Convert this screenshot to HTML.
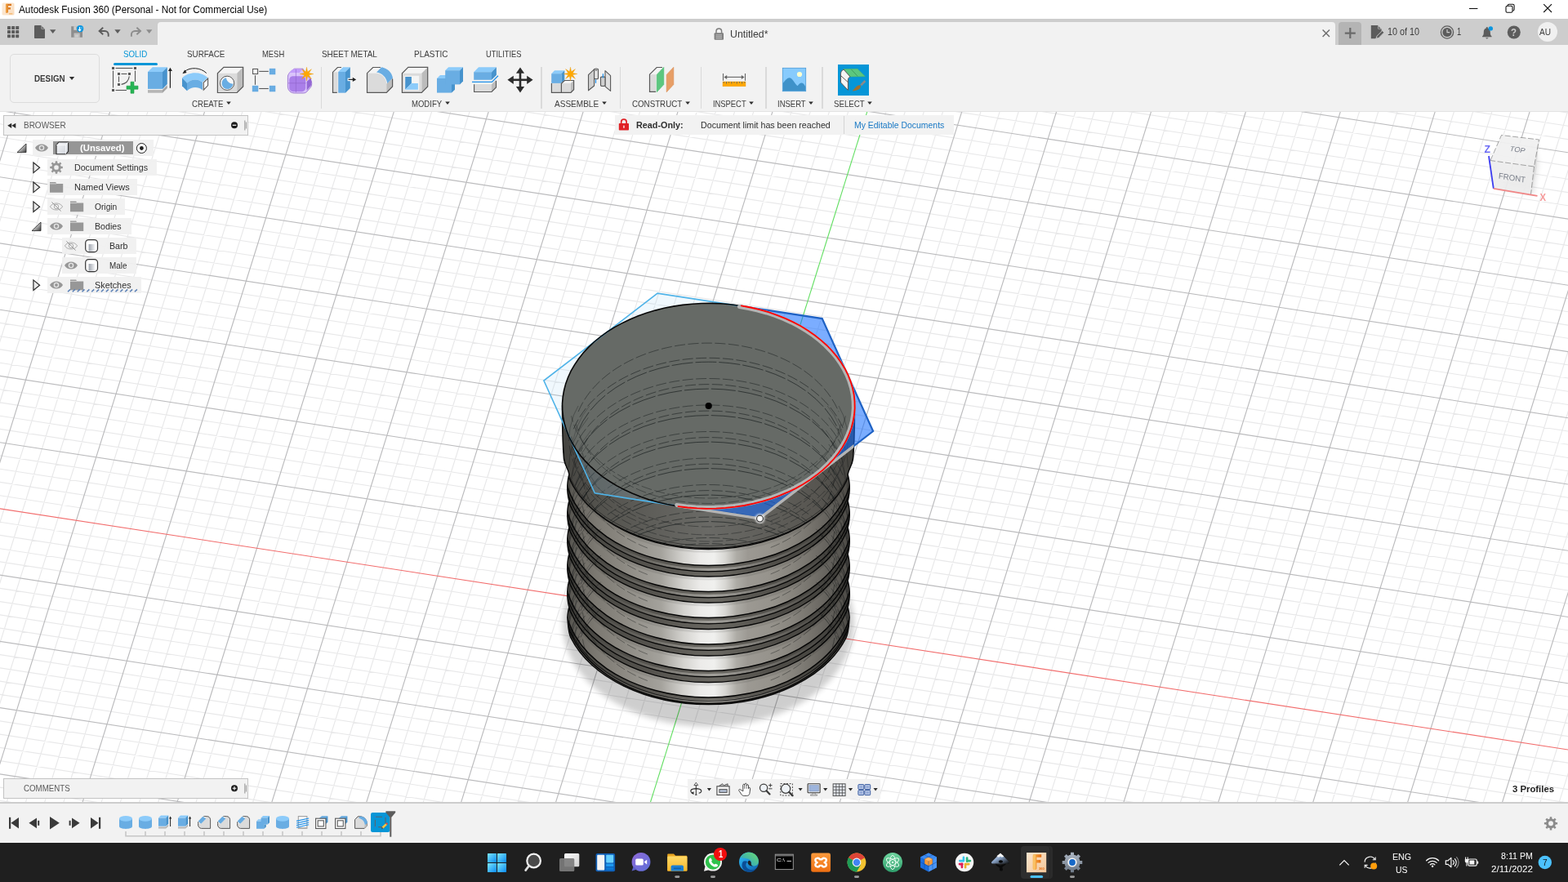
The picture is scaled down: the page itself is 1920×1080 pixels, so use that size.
<!DOCTYPE html>
<html lang="en"><head><meta charset="utf-8"><title>Autodesk Fusion 360 (Personal - Not for Commercial Use)</title>
<style>
*{box-sizing:border-box}
html,body{margin:0;padding:0}
body{width:1920px;height:1080px;overflow:hidden;background:#fff;font-family:"Liberation Sans",sans-serif;position:relative}
.a{position:absolute}
.t{position:absolute;white-space:nowrap;transform-origin:0 50%;display:block}
svg{position:absolute;overflow:visible}
</style></head>
<body>
<div class="a" id="viewport" style="left:0;top:136px;width:1920px;height:847px;background:#fff;overflow:hidden">
<svg style="left:0;top:0" width="1920" height="847" viewBox="0 136 1920 847">
<path d="M1893.4 134.0L1922.0 138.4M1787.7 134.0L1922.0 154.6M1682.0 134.0L1922.0 170.9M42.7 134.0L-2.0 276.5M1470.6 134.0L1922.0 203.4M65.9 134.0L-2.0 350.4M1364.8 134.0L1922.0 219.6M89.1 134.0L-2.0 424.2M1259.1 134.0L1922.0 235.9M112.3 134.0L-2.0 498.1M1153.4 134.0L1922.0 252.1M158.6 134.0L-2.0 645.8M941.9 134.0L1922.0 284.6M181.8 134.0L-2.0 719.6M836.2 134.0L1922.0 300.9M205.0 134.0L-2.0 793.5M730.5 134.0L1922.0 317.1M228.2 134.0L-2.0 867.3M624.8 134.0L1922.0 333.4M274.5 134.0L7.4 985.0M413.3 134.0L1922.0 365.9M297.7 134.0L30.6 985.0M307.6 134.0L1922.0 382.1M320.9 134.0L53.8 985.0M201.9 134.0L1922.0 398.4M344.1 134.0L77.0 985.0M96.1 134.0L1922.0 414.6M390.4 134.0L123.3 985.0M-2.0 151.4L1922.0 447.1M413.6 134.0L146.5 985.0M-2.0 167.7L1922.0 463.3M436.8 134.0L169.7 985.0M-2.0 183.9L1922.0 479.6M460.0 134.0L192.9 985.0M-2.0 200.2L1922.0 495.8M506.3 134.0L239.2 985.0M-2.0 232.7L1922.0 528.3M529.5 134.0L262.4 985.0M-2.0 248.9L1922.0 544.6M552.7 134.0L285.6 985.0M-2.0 265.2L1922.0 560.8M575.9 134.0L308.8 985.0M-2.0 281.4L1922.0 577.1M622.3 134.0L355.1 985.0M-2.0 313.9L1922.0 609.6M645.4 134.0L378.3 985.0M-2.0 330.1L1922.0 625.8M668.6 134.0L401.5 985.0M-2.0 346.4L1922.0 642.1M691.8 134.0L424.7 985.0M-2.0 362.6L1922.0 658.3M738.2 134.0L471.0 985.0M-2.0 395.1L1922.0 690.8M761.3 134.0L494.2 985.0M-2.0 411.4L1922.0 707.1M784.5 134.0L517.4 985.0M-2.0 427.6L1922.0 723.3M807.7 134.0L540.6 985.0M-2.0 443.9L1922.0 739.6M854.1 134.0L587.0 985.0M-2.0 476.4L1922.0 772.1M877.2 134.0L610.1 985.0M-2.0 492.6L1922.0 788.3M900.4 134.0L633.3 985.0M-2.0 508.9L1922.0 804.6M923.6 134.0L656.5 985.0M-2.0 525.1L1922.0 820.8M970.0 134.0L702.9 985.0M-2.0 557.6L1922.0 853.3M993.1 134.0L726.0 985.0M-2.0 573.9L1922.0 869.6M1016.3 134.0L749.2 985.0M-2.0 590.1L1922.0 885.8M1039.5 134.0L772.4 985.0M-2.0 606.4L1922.0 902.0M1085.9 134.0L818.8 985.0M-2.0 638.9L1922.0 934.5M1109.1 134.0L841.9 985.0M-2.0 655.1L1922.0 950.8M1132.2 134.0L865.1 985.0M-2.0 671.4L1922.0 967.0M1155.4 134.0L888.3 985.0M-2.0 687.6L1922.0 983.3M1201.8 134.0L934.7 985.0M-2.0 720.1L1721.7 985.0M1225.0 134.0L957.8 985.0M-2.0 736.3L1616.0 985.0M1248.1 134.0L981.0 985.0M-2.0 752.6L1510.2 985.0M1271.3 134.0L1004.2 985.0M-2.0 768.8L1404.5 985.0M1317.7 134.0L1050.6 985.0M-2.0 801.3L1193.1 985.0M1340.9 134.0L1073.8 985.0M-2.0 817.6L1087.3 985.0M1364.0 134.0L1096.9 985.0M-2.0 833.8L981.6 985.0M1387.2 134.0L1120.1 985.0M-2.0 850.1L875.9 985.0M1433.6 134.0L1166.5 985.0M-2.0 882.6L664.4 985.0M1456.8 134.0L1189.7 985.0M-2.0 898.8L558.7 985.0M1479.9 134.0L1212.8 985.0M-2.0 915.1L453.0 985.0M1503.1 134.0L1236.0 985.0M-2.0 931.3L347.3 985.0M1549.5 134.0L1282.4 985.0M-2.0 963.8L135.8 985.0M1572.7 134.0L1305.6 985.0M-2.0 980.1L30.1 985.0M1595.9 134.0L1328.7 985.0M1619.0 134.0L1351.9 985.0M1665.4 134.0L1398.3 985.0M1688.6 134.0L1421.5 985.0M1711.8 134.0L1444.6 985.0M1734.9 134.0L1467.8 985.0M1781.3 134.0L1514.2 985.0M1804.5 134.0L1537.4 985.0M1827.7 134.0L1560.6 985.0M1850.8 134.0L1583.7 985.0M1897.2 134.0L1630.1 985.0M1920.4 134.0L1653.3 985.0M1922.0 202.7L1676.5 985.0M1922.0 276.6L1699.6 985.0M1922.0 424.3L1746.0 985.0M1922.0 498.1L1769.2 985.0M1922.0 572.0L1792.4 985.0M1922.0 645.8L1815.5 985.0M1922.0 793.5L1861.9 985.0M1922.0 867.4L1885.1 985.0M1922.0 941.2L1908.3 985.0" stroke="#e8e8e9" stroke-width="1.15" fill="none"/>
<path d="M19.5 134.0L-2.0 202.6M1576.3 134.0L1922.0 187.1M135.5 134.0L-2.0 571.9M1047.7 134.0L1922.0 268.4M251.4 134.0L-2.0 941.2M519.0 134.0L1922.0 349.6M367.3 134.0L100.2 985.0M-2.0 135.2L1922.0 430.9M483.2 134.0L216.1 985.0M-2.0 216.4L1922.0 512.1M599.1 134.0L332.0 985.0M-2.0 297.6L1922.0 593.3M715.0 134.0L447.9 985.0M-2.0 378.9L1922.0 674.6M830.9 134.0L563.8 985.0M-2.0 460.1L1922.0 755.8M946.8 134.0L679.7 985.0M-2.0 541.4L1922.0 837.1M1178.6 134.0L911.5 985.0M-2.0 703.8L1827.4 985.0M1294.5 134.0L1027.4 985.0M-2.0 785.1L1298.8 985.0M1410.4 134.0L1143.3 985.0M-2.0 866.3L770.2 985.0M1526.3 134.0L1259.2 985.0M-2.0 947.6L241.5 985.0M1642.2 134.0L1375.1 985.0M1758.1 134.0L1491.0 985.0M1874.0 134.0L1606.9 985.0M1922.0 350.4L1722.8 985.0M1922.0 719.7L1838.7 985.0" stroke="#bbbbbd" stroke-width="1.15" fill="none"/>
<path d="M-2.0 622.6L1922.0 918.3" stroke="#f26d6d" stroke-width="1.1" fill="none"/>
<path d="M1062.7 134.0L795.6 985.0" stroke="#62de62" stroke-width="1.1" fill="none"/>
<defs>
<filter id="blur1" x="-50%" y="-50%" width="200%" height="200%"><feGaussianBlur stdDeviation="1.3"/></filter>
<filter id="blur6" x="-20%" y="-20%" width="140%" height="140%"><feGaussianBlur stdDeviation="3.6"/></filter>
<linearGradient id="gBody" gradientUnits="userSpaceOnUse" x1="696" y1="0" x2="1039" y2="0">
 <stop offset="0" stop-color="#3c3b37"/><stop offset="0.06" stop-color="#484742"/><stop offset="0.3" stop-color="#55534e"/>
 <stop offset="0.52" stop-color="#6a6862"/><stop offset="0.75" stop-color="#4f4d48"/><stop offset="0.95" stop-color="#42413c"/><stop offset="1" stop-color="#383733"/>
</linearGradient>
<linearGradient id="gBand" gradientUnits="userSpaceOnUse" x1="696" y1="0" x2="1039" y2="0">
 <stop offset="0" stop-color="#53514c"/><stop offset="0.02" stop-color="#605e58"/><stop offset="0.047" stop-color="#6e6b65"/><stop offset="0.1" stop-color="#7c7972"/>
 <stop offset="0.19" stop-color="#8b8881"/><stop offset="0.33" stop-color="#a4a29c"/><stop offset="0.41" stop-color="#d3d2ce"/>
 <stop offset="0.47" stop-color="#ecebe9"/><stop offset="0.52" stop-color="#f0f0ee"/><stop offset="0.56" stop-color="#d8d7d3"/>
 <stop offset="0.60" stop-color="#aeaca6"/><stop offset="0.64" stop-color="#9c9993"/><stop offset="0.72" stop-color="#96938c"/>
 <stop offset="0.80" stop-color="#87847d"/><stop offset="0.883" stop-color="#716e68"/><stop offset="0.945" stop-color="#5f5d58"/>
 <stop offset="0.985" stop-color="#52504b"/><stop offset="1" stop-color="#4a4844"/>
</linearGradient>
<linearGradient id="gLip" gradientUnits="userSpaceOnUse" x1="688" y1="0" x2="1046" y2="0">
 <stop offset="0" stop-color="#454440"/><stop offset="0.12" stop-color="#53524d"/><stop offset="0.5" stop-color="#6a6a66"/>
 <stop offset="0.88" stop-color="#575550"/><stop offset="1" stop-color="#43423e"/>
</linearGradient>
<linearGradient id="gMid" gradientUnits="userSpaceOnUse" x1="696" y1="0" x2="1039" y2="0">
 <stop offset="0" stop-color="#3a3936"/><stop offset="0.3" stop-color="#6f6d67"/><stop offset="0.52" stop-color="#a3a19c"/>
 <stop offset="0.8" stop-color="#5f5d58"/><stop offset="1" stop-color="#33322f"/>
</linearGradient>
<clipPath id="cBody"><path d="M688.5 497.0C688.5 520 689.1 545 690.5 562C691.5 570 696.0 574 697.0 581L696.3 583.5L695.8 586.0L695.4 588.5L695.1 591.0L694.9 593.5L694.8 596.0L694.8 598.5L694.9 601.0L695.1 603.5L695.4 606.0L695.8 608.5L696.3 611.0L697.0 613.5L696.3 616.0L695.8 618.5L695.4 621.0L695.1 623.5L694.9 626.0L694.8 628.5L694.8 631.0L694.9 633.5L695.1 636.0L695.4 638.5L695.8 641.0L696.3 643.5L697.0 646.0L696.3 648.5L695.8 651.0L695.4 653.5L695.1 656.0L694.9 658.5L694.8 661.0L694.8 663.5L694.9 666.0L695.1 668.5L695.4 671.0L695.8 673.5L696.3 676.0L697.0 678.5L696.3 681.0L695.8 683.5L695.4 686.0L695.1 688.5L694.9 691.0L694.8 693.5L694.8 696.0L694.9 698.5L695.1 701.0L695.4 703.5L695.8 706.0L696.3 708.5L697.0 711.0L696.3 713.5L695.8 716.0L695.4 718.5L695.1 721.0L694.9 723.5L694.8 726.0L694.8 728.5L694.9 731.0L695.1 733.5L695.4 736.0L695.8 738.5L696.3 741.0L697.0 743.5L696.3 746.0L695.8 748.5L695.4 751.0L695.1 753.5L694.9 756.0Q696.0 775.0 699.0 781.0A178.0 120.3 0 0 0 1036.0 781.0Q1039.0 775.0 1040.1 756.0L1039.9 753.5L1039.6 751.0L1039.2 748.5L1038.7 746.0L1038.0 743.5L1038.7 741.0L1039.2 738.5L1039.6 736.0L1039.9 733.5L1040.1 731.0L1040.2 728.5L1040.2 726.0L1040.1 723.5L1039.9 721.0L1039.6 718.5L1039.2 716.0L1038.7 713.5L1038.0 711.0L1038.7 708.5L1039.2 706.0L1039.6 703.5L1039.9 701.0L1040.1 698.5L1040.2 696.0L1040.2 693.5L1040.1 691.0L1039.9 688.5L1039.6 686.0L1039.2 683.5L1038.7 681.0L1038.0 678.5L1038.7 676.0L1039.2 673.5L1039.6 671.0L1039.9 668.5L1040.1 666.0L1040.2 663.5L1040.2 661.0L1040.1 658.5L1039.9 656.0L1039.6 653.5L1039.2 651.0L1038.7 648.5L1038.0 646.0L1038.7 643.5L1039.2 641.0L1039.6 638.5L1039.9 636.0L1040.1 633.5L1040.2 631.0L1040.2 628.5L1040.1 626.0L1039.9 623.5L1039.6 621.0L1039.2 618.5L1038.7 616.0L1038.0 613.5L1038.7 611.0L1039.2 608.5L1039.6 606.0L1039.9 603.5L1040.1 601.0L1040.2 598.5L1040.2 596.0L1040.1 593.5L1039.9 591.0L1039.6 588.5L1039.2 586.0L1038.7 583.5L1038.0 581.0C1039.0 574 1043.5 570 1044.5 562C1045.9 545 1046.5 520 1046.5 497.0Z"/></clipPath>
<clipPath id="cTop"><ellipse cx="867.5" cy="497.0" rx="179.0" ry="125.6"/></clipPath>
<clipPath id="cLipTop"><path d="M688.5 497.0A179.0 125.6 0 0 0 1046.5 497.0L1046.5 551.0L1045.5 551.0A178.0 120.3 0 0 1 689.5 551.0L688.5 551.0Z"/><ellipse cx="867.5" cy="497.0" rx="179.0" ry="125.6"/></clipPath>
<clipPath id="cAll"><path d="M688.5 497.0C688.5 520 689.1 545 690.5 562C691.5 570 696.0 574 697.0 581L696.3 583.5L695.8 586.0L695.4 588.5L695.1 591.0L694.9 593.5L694.8 596.0L694.8 598.5L694.9 601.0L695.1 603.5L695.4 606.0L695.8 608.5L696.3 611.0L697.0 613.5L696.3 616.0L695.8 618.5L695.4 621.0L695.1 623.5L694.9 626.0L694.8 628.5L694.8 631.0L694.9 633.5L695.1 636.0L695.4 638.5L695.8 641.0L696.3 643.5L697.0 646.0L696.3 648.5L695.8 651.0L695.4 653.5L695.1 656.0L694.9 658.5L694.8 661.0L694.8 663.5L694.9 666.0L695.1 668.5L695.4 671.0L695.8 673.5L696.3 676.0L697.0 678.5L696.3 681.0L695.8 683.5L695.4 686.0L695.1 688.5L694.9 691.0L694.8 693.5L694.8 696.0L694.9 698.5L695.1 701.0L695.4 703.5L695.8 706.0L696.3 708.5L697.0 711.0L696.3 713.5L695.8 716.0L695.4 718.5L695.1 721.0L694.9 723.5L694.8 726.0L694.8 728.5L694.9 731.0L695.1 733.5L695.4 736.0L695.8 738.5L696.3 741.0L697.0 743.5L696.3 746.0L695.8 748.5L695.4 751.0L695.1 753.5L694.9 756.0Q696.0 775.0 699.0 781.0A178.0 120.3 0 0 0 1036.0 781.0Q1039.0 775.0 1040.1 756.0L1039.9 753.5L1039.6 751.0L1039.2 748.5L1038.7 746.0L1038.0 743.5L1038.7 741.0L1039.2 738.5L1039.6 736.0L1039.9 733.5L1040.1 731.0L1040.2 728.5L1040.2 726.0L1040.1 723.5L1039.9 721.0L1039.6 718.5L1039.2 716.0L1038.7 713.5L1038.0 711.0L1038.7 708.5L1039.2 706.0L1039.6 703.5L1039.9 701.0L1040.1 698.5L1040.2 696.0L1040.2 693.5L1040.1 691.0L1039.9 688.5L1039.6 686.0L1039.2 683.5L1038.7 681.0L1038.0 678.5L1038.7 676.0L1039.2 673.5L1039.6 671.0L1039.9 668.5L1040.1 666.0L1040.2 663.5L1040.2 661.0L1040.1 658.5L1039.9 656.0L1039.6 653.5L1039.2 651.0L1038.7 648.5L1038.0 646.0L1038.7 643.5L1039.2 641.0L1039.6 638.5L1039.9 636.0L1040.1 633.5L1040.2 631.0L1040.2 628.5L1040.1 626.0L1039.9 623.5L1039.6 621.0L1039.2 618.5L1038.7 616.0L1038.0 613.5L1038.7 611.0L1039.2 608.5L1039.6 606.0L1039.9 603.5L1040.1 601.0L1040.2 598.5L1040.2 596.0L1040.1 593.5L1039.9 591.0L1039.6 588.5L1039.2 586.0L1038.7 583.5L1038.0 581.0C1039.0 574 1043.5 570 1044.5 562C1045.9 545 1046.5 520 1046.5 497.0Z"/><ellipse cx="867.5" cy="497.0" rx="179.0" ry="125.6"/></clipPath>
</defs>
<ellipse cx="867.4" cy="763.2" rx="178.5" ry="126.5" fill="#000" opacity="0.19" filter="url(#blur6)"/>
<path d="M688.5 497.0C688.5 520 689.1 545 690.5 562C691.5 570 696.0 574 697.0 581L696.3 583.5L695.8 586.0L695.4 588.5L695.1 591.0L694.9 593.5L694.8 596.0L694.8 598.5L694.9 601.0L695.1 603.5L695.4 606.0L695.8 608.5L696.3 611.0L697.0 613.5L696.3 616.0L695.8 618.5L695.4 621.0L695.1 623.5L694.9 626.0L694.8 628.5L694.8 631.0L694.9 633.5L695.1 636.0L695.4 638.5L695.8 641.0L696.3 643.5L697.0 646.0L696.3 648.5L695.8 651.0L695.4 653.5L695.1 656.0L694.9 658.5L694.8 661.0L694.8 663.5L694.9 666.0L695.1 668.5L695.4 671.0L695.8 673.5L696.3 676.0L697.0 678.5L696.3 681.0L695.8 683.5L695.4 686.0L695.1 688.5L694.9 691.0L694.8 693.5L694.8 696.0L694.9 698.5L695.1 701.0L695.4 703.5L695.8 706.0L696.3 708.5L697.0 711.0L696.3 713.5L695.8 716.0L695.4 718.5L695.1 721.0L694.9 723.5L694.8 726.0L694.8 728.5L694.9 731.0L695.1 733.5L695.4 736.0L695.8 738.5L696.3 741.0L697.0 743.5L696.3 746.0L695.8 748.5L695.4 751.0L695.1 753.5L694.9 756.0Q696.0 775.0 699.0 781.0A178.0 120.3 0 0 0 1036.0 781.0Q1039.0 775.0 1040.1 756.0L1039.9 753.5L1039.6 751.0L1039.2 748.5L1038.7 746.0L1038.0 743.5L1038.7 741.0L1039.2 738.5L1039.6 736.0L1039.9 733.5L1040.1 731.0L1040.2 728.5L1040.2 726.0L1040.1 723.5L1039.9 721.0L1039.6 718.5L1039.2 716.0L1038.7 713.5L1038.0 711.0L1038.7 708.5L1039.2 706.0L1039.6 703.5L1039.9 701.0L1040.1 698.5L1040.2 696.0L1040.2 693.5L1040.1 691.0L1039.9 688.5L1039.6 686.0L1039.2 683.5L1038.7 681.0L1038.0 678.5L1038.7 676.0L1039.2 673.5L1039.6 671.0L1039.9 668.5L1040.1 666.0L1040.2 663.5L1040.2 661.0L1040.1 658.5L1039.9 656.0L1039.6 653.5L1039.2 651.0L1038.7 648.5L1038.0 646.0L1038.7 643.5L1039.2 641.0L1039.6 638.5L1039.9 636.0L1040.1 633.5L1040.2 631.0L1040.2 628.5L1040.1 626.0L1039.9 623.5L1039.6 621.0L1039.2 618.5L1038.7 616.0L1038.0 613.5L1038.7 611.0L1039.2 608.5L1039.6 606.0L1039.9 603.5L1040.1 601.0L1040.2 598.5L1040.2 596.0L1040.1 593.5L1039.9 591.0L1039.6 588.5L1039.2 586.0L1038.7 583.5L1038.0 581.0C1039.0 574 1043.5 570 1044.5 562C1045.9 545 1046.5 520 1046.5 497.0Z" fill="url(#gBody)"/>
<g clip-path="url(#cBody)" fill="none">
<path d="M1043.50 552.20A176.00 120.30 0 0 1 691.50 552.20L691.50 572.20A176.00 120.30 0 0 0 1043.50 572.20Z" fill="url(#gBand)"/>
<path d="M1043.50 552.20A176.00 120.30 0 0 1 691.50 552.20L691.50 556.70A176.00 120.30 0 0 0 1043.50 556.70Z" fill="#000" opacity="0.08"/>
<path d="M1043.50 552.20A176.00 120.30 0 0 1 691.50 552.20" stroke="#050505" stroke-width="1.4"/>
<path d="M1043.50 572.20A176.00 120.30 0 0 1 691.50 572.20" stroke="#050505" stroke-width="1.5"/>
<path d="M1043.50 575.80A176.00 120.30 0 0 1 691.50 575.80L691.50 578.80A176.00 120.30 0 0 0 1043.50 578.80Z" fill="url(#gMid)"/>
<path d="M1043.50 579.60A176.00 120.30 0 0 1 691.50 579.60" stroke="#050505" stroke-width="1.2"/>
<path d="M1043.50 585.70A176.00 120.30 0 0 1 691.50 585.70L691.50 604.20A176.00 120.30 0 0 0 1043.50 604.20Z" fill="url(#gBand)"/>
<path d="M1043.50 585.70A176.00 120.30 0 0 1 691.50 585.70L691.50 590.20A176.00 120.30 0 0 0 1043.50 590.20Z" fill="#000" opacity="0.08"/>
<path d="M1043.50 585.70A176.00 120.30 0 0 1 691.50 585.70" stroke="#050505" stroke-width="1.4"/>
<path d="M1043.50 604.20A176.00 120.30 0 0 1 691.50 604.20" stroke="#050505" stroke-width="1.5"/>
<path d="M1043.50 607.80A176.00 120.30 0 0 1 691.50 607.80L691.50 610.80A176.00 120.30 0 0 0 1043.50 610.80Z" fill="url(#gMid)"/>
<path d="M1043.50 611.60A176.00 120.30 0 0 1 691.50 611.60" stroke="#050505" stroke-width="1.2"/>
<path d="M1043.50 617.70A176.00 120.30 0 0 1 691.50 617.70L691.50 636.20A176.00 120.30 0 0 0 1043.50 636.20Z" fill="url(#gBand)"/>
<path d="M1043.50 617.70A176.00 120.30 0 0 1 691.50 617.70L691.50 622.20A176.00 120.30 0 0 0 1043.50 622.20Z" fill="#000" opacity="0.08"/>
<path d="M1043.50 617.70A176.00 120.30 0 0 1 691.50 617.70" stroke="#050505" stroke-width="1.4"/>
<path d="M1043.50 636.20A176.00 120.30 0 0 1 691.50 636.20" stroke="#050505" stroke-width="1.5"/>
<path d="M1043.50 639.80A176.00 120.30 0 0 1 691.50 639.80L691.50 642.80A176.00 120.30 0 0 0 1043.50 642.80Z" fill="url(#gMid)"/>
<path d="M1043.50 643.60A176.00 120.30 0 0 1 691.50 643.60" stroke="#050505" stroke-width="1.2"/>
<path d="M1043.50 650.20A176.00 120.30 0 0 1 691.50 650.20L691.50 668.70A176.00 120.30 0 0 0 1043.50 668.70Z" fill="url(#gBand)"/>
<path d="M1043.50 650.20A176.00 120.30 0 0 1 691.50 650.20L691.50 654.70A176.00 120.30 0 0 0 1043.50 654.70Z" fill="#000" opacity="0.08"/>
<path d="M1043.50 650.20A176.00 120.30 0 0 1 691.50 650.20" stroke="#050505" stroke-width="1.4"/>
<path d="M1043.50 668.70A176.00 120.30 0 0 1 691.50 668.70" stroke="#050505" stroke-width="1.5"/>
<path d="M1043.50 672.30A176.00 120.30 0 0 1 691.50 672.30L691.50 675.30A176.00 120.30 0 0 0 1043.50 675.30Z" fill="url(#gMid)"/>
<path d="M1043.50 676.10A176.00 120.30 0 0 1 691.50 676.10" stroke="#050505" stroke-width="1.2"/>
<path d="M1043.50 682.70A176.00 120.30 0 0 1 691.50 682.70L691.50 701.20A176.00 120.30 0 0 0 1043.50 701.20Z" fill="url(#gBand)"/>
<path d="M1043.50 682.70A176.00 120.30 0 0 1 691.50 682.70L691.50 687.20A176.00 120.30 0 0 0 1043.50 687.20Z" fill="#000" opacity="0.08"/>
<path d="M1043.50 682.70A176.00 120.30 0 0 1 691.50 682.70" stroke="#050505" stroke-width="1.4"/>
<path d="M1043.50 701.20A176.00 120.30 0 0 1 691.50 701.20" stroke="#050505" stroke-width="1.5"/>
<path d="M1043.50 704.80A176.00 120.30 0 0 1 691.50 704.80L691.50 707.80A176.00 120.30 0 0 0 1043.50 707.80Z" fill="url(#gMid)"/>
<path d="M1043.50 708.60A176.00 120.30 0 0 1 691.50 708.60" stroke="#050505" stroke-width="1.2"/>
<path d="M1043.50 715.20A176.00 120.30 0 0 1 691.50 715.20L691.50 733.70A176.00 120.30 0 0 0 1043.50 733.70Z" fill="url(#gBand)"/>
<path d="M1043.50 715.20A176.00 120.30 0 0 1 691.50 715.20L691.50 719.70A176.00 120.30 0 0 0 1043.50 719.70Z" fill="#000" opacity="0.08"/>
<path d="M1043.50 715.20A176.00 120.30 0 0 1 691.50 715.20" stroke="#050505" stroke-width="1.4"/>
<path d="M1043.50 733.70A176.00 120.30 0 0 1 691.50 733.70" stroke="#050505" stroke-width="1.5"/>
<path d="M1043.50 737.30A176.00 120.30 0 0 1 691.50 737.30L691.50 740.30A176.00 120.30 0 0 0 1043.50 740.30Z" fill="url(#gMid)"/>
<path d="M1043.50 741.10A176.00 120.30 0 0 1 691.50 741.10" stroke="#050505" stroke-width="1.2"/>
<path d="M1043.50 738.20A176.00 120.30 0 0 1 691.50 738.20" stroke="#0c0c0c" stroke-width="1.2" opacity="0.8"/>
</g>
<path d="M688.5 497.0A179.0 125.6 0 0 0 1046.5 497.0L1046.5 551.0L1045.5 551.0A178.0 120.3 0 0 1 689.5 551.0L688.5 551.0Z" fill="url(#gLip)" clip-path="url(#cBody)"/>
<path d="M1045.50 551.00A178.00 120.30 0 0 1 689.50 551.00" stroke="#0c0c0c" stroke-width="1.5" fill="none" clip-path="url(#cBody)"/>
<path d="M1045.50 548.00A178.00 120.30 0 0 1 689.50 548.00" stroke="#0c0c0c" stroke-width="0.9" opacity="0.55" fill="none" clip-path="url(#cBody)"/>
<path d="M688.5 497.0C688.5 520 689.1 545 690.5 562C691.5 570 696.0 574 697.0 581L696.3 583.5L695.8 586.0L695.4 588.5L695.1 591.0L694.9 593.5L694.8 596.0L694.8 598.5L694.9 601.0L695.1 603.5L695.4 606.0L695.8 608.5L696.3 611.0L697.0 613.5L696.3 616.0L695.8 618.5L695.4 621.0L695.1 623.5L694.9 626.0L694.8 628.5L694.8 631.0L694.9 633.5L695.1 636.0L695.4 638.5L695.8 641.0L696.3 643.5L697.0 646.0L696.3 648.5L695.8 651.0L695.4 653.5L695.1 656.0L694.9 658.5L694.8 661.0L694.8 663.5L694.9 666.0L695.1 668.5L695.4 671.0L695.8 673.5L696.3 676.0L697.0 678.5L696.3 681.0L695.8 683.5L695.4 686.0L695.1 688.5L694.9 691.0L694.8 693.5L694.8 696.0L694.9 698.5L695.1 701.0L695.4 703.5L695.8 706.0L696.3 708.5L697.0 711.0L696.3 713.5L695.8 716.0L695.4 718.5L695.1 721.0L694.9 723.5L694.8 726.0L694.8 728.5L694.9 731.0L695.1 733.5L695.4 736.0L695.8 738.5L696.3 741.0L697.0 743.5L696.3 746.0L695.8 748.5L695.4 751.0L695.1 753.5L694.9 756.0Q696.0 775.0 699.0 781.0A178.0 120.3 0 0 0 1036.0 781.0Q1039.0 775.0 1040.1 756.0L1039.9 753.5L1039.6 751.0L1039.2 748.5L1038.7 746.0L1038.0 743.5L1038.7 741.0L1039.2 738.5L1039.6 736.0L1039.9 733.5L1040.1 731.0L1040.2 728.5L1040.2 726.0L1040.1 723.5L1039.9 721.0L1039.6 718.5L1039.2 716.0L1038.7 713.5L1038.0 711.0L1038.7 708.5L1039.2 706.0L1039.6 703.5L1039.9 701.0L1040.1 698.5L1040.2 696.0L1040.2 693.5L1040.1 691.0L1039.9 688.5L1039.6 686.0L1039.2 683.5L1038.7 681.0L1038.0 678.5L1038.7 676.0L1039.2 673.5L1039.6 671.0L1039.9 668.5L1040.1 666.0L1040.2 663.5L1040.2 661.0L1040.1 658.5L1039.9 656.0L1039.6 653.5L1039.2 651.0L1038.7 648.5L1038.0 646.0L1038.7 643.5L1039.2 641.0L1039.6 638.5L1039.9 636.0L1040.1 633.5L1040.2 631.0L1040.2 628.5L1040.1 626.0L1039.9 623.5L1039.6 621.0L1039.2 618.5L1038.7 616.0L1038.0 613.5L1038.7 611.0L1039.2 608.5L1039.6 606.0L1039.9 603.5L1040.1 601.0L1040.2 598.5L1040.2 596.0L1040.1 593.5L1039.9 591.0L1039.6 588.5L1039.2 586.0L1038.7 583.5L1038.0 581.0C1039.0 574 1043.5 570 1044.5 562C1045.9 545 1046.5 520 1046.5 497.0Z" fill="none" stroke="#0a0a0a" stroke-width="1.5"/>
<ellipse cx="867.5" cy="497.0" rx="179.0" ry="125.6" fill="#666a66"/>
<g clip-path="url(#cLipTop)" fill="none" stroke="#1d2222" stroke-width="1">
<path d="M708.09 504.08A166.00 116.48 0 0 1 1026.91 504.08" stroke-dasharray="13 3.5" opacity="0.55"/>
<path d="M702.33 525.32A172.00 120.69 0 0 1 1032.67 525.32" stroke-dasharray="13 3.5" opacity="0.6"/>
<path d="M708.09 527.18A166.00 116.48 0 0 1 1026.91 527.18" stroke-dasharray="26 3" opacity="0.7"/>
<path d="M702.33 550.52A172.00 120.69 0 0 1 1032.67 550.52" stroke-dasharray="13 3.5" opacity="0.55"/>
<path d="M710.97 553.07A163.00 114.38 0 0 1 1024.03 553.07" stroke-dasharray="13 3.5" stroke-dashoffset="7" opacity="0.6"/>
<path d="M704.25 562.11A170.00 119.29 0 0 1 1030.75 562.11" stroke-dasharray="30 3" opacity="0.72"/>
<path d="M702.33 583.02A172.00 120.69 0 0 1 1032.67 583.02" stroke-dasharray="13 3.5" opacity="0.55"/>
<path d="M710.97 585.57A163.00 114.38 0 0 1 1024.03 585.57" stroke-dasharray="13 3.5" stroke-dashoffset="7" opacity="0.6"/>
<path d="M704.25 594.61A170.00 119.29 0 0 1 1030.75 594.61" stroke-dasharray="30 3" opacity="0.72"/>
<path d="M702.33 615.52A172.00 120.69 0 0 1 1032.67 615.52" stroke-dasharray="13 3.5" opacity="0.55"/>
<path d="M710.97 618.07A163.00 114.38 0 0 1 1024.03 618.07" stroke-dasharray="13 3.5" stroke-dashoffset="7" opacity="0.6"/>
<path d="M704.25 627.11A170.00 119.29 0 0 1 1030.75 627.11" stroke-dasharray="30 3" opacity="0.72"/>
<path d="M702.33 648.02A172.00 120.69 0 0 1 1032.67 648.02" stroke-dasharray="13 3.5" opacity="0.55"/>
<path d="M710.97 650.57A163.00 114.38 0 0 1 1024.03 650.57" stroke-dasharray="13 3.5" stroke-dashoffset="7" opacity="0.6"/>
<path d="M704.25 659.61A170.00 119.29 0 0 1 1030.75 659.61" stroke-dasharray="30 3" opacity="0.72"/>
<path d="M702.33 680.52A172.00 120.69 0 0 1 1032.67 680.52" stroke-dasharray="13 3.5" opacity="0.55"/>
<path d="M710.97 683.07A163.00 114.38 0 0 1 1024.03 683.07" stroke-dasharray="13 3.5" stroke-dashoffset="7" opacity="0.6"/>
<path d="M704.25 692.11A170.00 119.29 0 0 1 1030.75 692.11" stroke-dasharray="30 3" opacity="0.72"/>
<path d="M702.33 713.02A172.00 120.69 0 0 1 1032.67 713.02" stroke-dasharray="13 3.5" opacity="0.55"/>
<path d="M710.97 715.57A163.00 114.38 0 0 1 1024.03 715.57" stroke-dasharray="13 3.5" stroke-dashoffset="7" opacity="0.6"/>
<path d="M704.25 724.61A170.00 119.29 0 0 1 1030.75 724.61" stroke-dasharray="30 3" opacity="0.72"/>
<path d="M702.33 745.52A172.00 120.69 0 0 1 1032.67 745.52" stroke-dasharray="13 3.5" opacity="0.55"/>
<path d="M710.97 748.07A163.00 114.38 0 0 1 1024.03 748.07" stroke-dasharray="13 3.5" stroke-dashoffset="7" opacity="0.6"/>
<path d="M704.25 757.11A170.00 119.29 0 0 1 1030.75 757.11" stroke-dasharray="30 3" opacity="0.72"/>
<path d="M702.33 778.02A172.00 120.69 0 0 1 1032.67 778.02" stroke-dasharray="13 3.5" opacity="0.55"/>
<path d="M710.97 780.57A163.00 114.38 0 0 1 1024.03 780.57" stroke-dasharray="13 3.5" stroke-dashoffset="7" opacity="0.6"/>
<path d="M704.25 789.61A170.00 119.29 0 0 1 1030.75 789.61" stroke-dasharray="30 3" opacity="0.72"/>
<path d="M1035.41 509.37A170.00 119.29 0 0 1 699.59 509.37" stroke-dasharray="13 3.5" opacity="0.45"/>
<path d="M1029.48 519.42A164.00 115.08 0 0 1 705.52 519.42" stroke-dasharray="13 3.5" opacity="0.45"/>
</g>
<g clip-path="url(#cBody)" fill="none" stroke="#15181a" stroke-width="1" opacity="0.42">
<path d="M1035.17 534.52A168.00 117.89 0 0 1 699.83 534.52" stroke-dasharray="13 3.5"/>
<path d="M1038.16 542.54A171.00 119.99 0 0 1 696.84 542.54" stroke-dasharray="13 3.5"/>
<path d="M1033.17 553.83A166.00 116.48 0 0 1 701.83 553.83" stroke-dasharray="13 3.5"/>
<path d="M695.50 649.19A172.00 120.69 0 0 1 728.35 578.25" stroke-dasharray="13 3.5"/>
<path d="M1006.65 578.25A172.00 120.69 0 0 1 1039.50 649.19" stroke-dasharray="13 3.5"/>
<path d="M704.50 649.98A163.00 114.38 0 0 1 735.63 582.75" stroke-dasharray="13 3.5"/>
<path d="M999.37 582.75A163.00 114.38 0 0 1 1030.50 649.98" stroke-dasharray="13 3.5"/>
<path d="M697.50 660.39A170.00 119.29 0 0 1 729.97 590.27" stroke-dasharray="13 3.5"/>
<path d="M1005.03 590.27A170.00 119.29 0 0 1 1037.50 660.39" stroke-dasharray="13 3.5"/>
<path d="M695.50 681.69A172.00 120.69 0 0 1 728.35 610.75" stroke-dasharray="13 3.5"/>
<path d="M1006.65 610.75A172.00 120.69 0 0 1 1039.50 681.69" stroke-dasharray="13 3.5"/>
<path d="M704.50 682.48A163.00 114.38 0 0 1 735.63 615.25" stroke-dasharray="13 3.5"/>
<path d="M999.37 615.25A163.00 114.38 0 0 1 1030.50 682.48" stroke-dasharray="13 3.5"/>
<path d="M697.50 692.89A170.00 119.29 0 0 1 729.97 622.77" stroke-dasharray="13 3.5"/>
<path d="M1005.03 622.77A170.00 119.29 0 0 1 1037.50 692.89" stroke-dasharray="13 3.5"/>
<path d="M695.50 714.19A172.00 120.69 0 0 1 728.35 643.25" stroke-dasharray="13 3.5"/>
<path d="M1006.65 643.25A172.00 120.69 0 0 1 1039.50 714.19" stroke-dasharray="13 3.5"/>
<path d="M704.50 714.98A163.00 114.38 0 0 1 735.63 647.75" stroke-dasharray="13 3.5"/>
<path d="M999.37 647.75A163.00 114.38 0 0 1 1030.50 714.98" stroke-dasharray="13 3.5"/>
<path d="M697.50 725.39A170.00 119.29 0 0 1 729.97 655.27" stroke-dasharray="13 3.5"/>
<path d="M1005.03 655.27A170.00 119.29 0 0 1 1037.50 725.39" stroke-dasharray="13 3.5"/>
<path d="M695.50 746.69A172.00 120.69 0 0 1 728.35 675.75" stroke-dasharray="13 3.5"/>
<path d="M1006.65 675.75A172.00 120.69 0 0 1 1039.50 746.69" stroke-dasharray="13 3.5"/>
<path d="M704.50 747.48A163.00 114.38 0 0 1 735.63 680.25" stroke-dasharray="13 3.5"/>
<path d="M999.37 680.25A163.00 114.38 0 0 1 1030.50 747.48" stroke-dasharray="13 3.5"/>
<path d="M697.50 757.89A170.00 119.29 0 0 1 729.97 687.77" stroke-dasharray="13 3.5"/>
<path d="M1005.03 687.77A170.00 119.29 0 0 1 1037.50 757.89" stroke-dasharray="13 3.5"/>
<path d="M695.50 779.19A172.00 120.69 0 0 1 728.35 708.25" stroke-dasharray="13 3.5"/>
<path d="M1006.65 708.25A172.00 120.69 0 0 1 1039.50 779.19" stroke-dasharray="13 3.5"/>
<path d="M704.50 779.98A163.00 114.38 0 0 1 735.63 712.75" stroke-dasharray="13 3.5"/>
<path d="M999.37 712.75A163.00 114.38 0 0 1 1030.50 779.98" stroke-dasharray="13 3.5"/>
<path d="M697.50 790.39A170.00 119.29 0 0 1 729.97 720.27" stroke-dasharray="13 3.5"/>
<path d="M1005.03 720.27A170.00 119.29 0 0 1 1037.50 790.39" stroke-dasharray="13 3.5"/>
<path d="M695.50 811.69A172.00 120.69 0 0 1 728.35 740.75" stroke-dasharray="13 3.5"/>
<path d="M1006.65 740.75A172.00 120.69 0 0 1 1039.50 811.69" stroke-dasharray="13 3.5"/>
<path d="M704.50 812.48A163.00 114.38 0 0 1 735.63 745.25" stroke-dasharray="13 3.5"/>
<path d="M999.37 745.25A163.00 114.38 0 0 1 1030.50 812.48" stroke-dasharray="13 3.5"/>
<path d="M697.50 822.89A170.00 119.29 0 0 1 729.97 752.77" stroke-dasharray="13 3.5"/>
<path d="M1005.03 752.77A170.00 119.29 0 0 1 1037.50 822.89" stroke-dasharray="13 3.5"/>
</g>
<g clip-path="url(#cBody)" fill="none" stroke="#0d0f10" stroke-width="0.9">
<path d="M792.83 638.55A155.00 108.76 0 0 1 713.19 553.47" stroke-dasharray="12 3.5" opacity="0.42"/>
<path d="M1021.81 553.47A155.00 108.76 0 0 1 942.17 638.55" stroke-dasharray="12 3.5" opacity="0.42"/>
<path d="M792.83 671.05A155.00 108.76 0 0 1 713.19 585.97" stroke-dasharray="12 3.5" opacity="0.42"/>
<path d="M1021.81 585.97A155.00 108.76 0 0 1 942.17 671.05" stroke-dasharray="12 3.5" opacity="0.42"/>
<path d="M792.83 703.55A155.00 108.76 0 0 1 713.19 618.47" stroke-dasharray="12 3.5" opacity="0.42"/>
<path d="M1021.81 618.47A155.00 108.76 0 0 1 942.17 703.55" stroke-dasharray="12 3.5" opacity="0.42"/>
<path d="M792.83 736.05A155.00 108.76 0 0 1 713.19 650.97" stroke-dasharray="12 3.5" opacity="0.42"/>
<path d="M1021.81 650.97A155.00 108.76 0 0 1 942.17 736.05" stroke-dasharray="12 3.5" opacity="0.42"/>
<path d="M792.83 768.55A155.00 108.76 0 0 1 713.19 683.47" stroke-dasharray="12 3.5" opacity="0.42"/>
<path d="M1021.81 683.47A155.00 108.76 0 0 1 942.17 768.55" stroke-dasharray="12 3.5" opacity="0.42"/>
<path d="M792.83 801.05A155.00 108.76 0 0 1 713.19 715.97" stroke-dasharray="12 3.5" opacity="0.42"/>
<path d="M1021.81 715.97A155.00 108.76 0 0 1 942.17 801.05" stroke-dasharray="12 3.5" opacity="0.42"/>
<path d="M792.83 833.55A155.00 108.76 0 0 1 713.19 748.47" stroke-dasharray="12 3.5" opacity="0.42"/>
<path d="M1021.81 748.47A155.00 108.76 0 0 1 942.17 833.55" stroke-dasharray="12 3.5" opacity="0.42"/>
<path d="M792.83 866.05A155.00 108.76 0 0 1 713.19 780.97" stroke-dasharray="12 3.5" opacity="0.42"/>
<path d="M1021.81 780.97A155.00 108.76 0 0 1 942.17 866.05" stroke-dasharray="12 3.5" opacity="0.42"/>
<path d="M696.50 540.00A171.00 119.99 0 0 1 720.31 478.92" opacity="0.34"/>
<path d="M1014.69 478.92A171.00 119.99 0 0 1 1038.50 540.00" opacity="0.34"/>
<path d="M700.50 554.00A167.00 117.18 0 0 1 723.76 494.35" opacity="0.26"/>
<path d="M1011.24 494.35A167.00 117.18 0 0 1 1034.50 554.00" opacity="0.26"/>
<path d="M696.50 572.50A171.00 119.99 0 0 1 720.31 511.42" opacity="0.34"/>
<path d="M1014.69 511.42A171.00 119.99 0 0 1 1038.50 572.50" opacity="0.34"/>
<path d="M700.50 586.50A167.00 117.18 0 0 1 723.76 526.85" opacity="0.26"/>
<path d="M1011.24 526.85A167.00 117.18 0 0 1 1034.50 586.50" opacity="0.26"/>
<path d="M696.50 605.00A171.00 119.99 0 0 1 720.31 543.92" opacity="0.34"/>
<path d="M1014.69 543.92A171.00 119.99 0 0 1 1038.50 605.00" opacity="0.34"/>
<path d="M700.50 619.00A167.00 117.18 0 0 1 723.76 559.35" opacity="0.26"/>
<path d="M1011.24 559.35A167.00 117.18 0 0 1 1034.50 619.00" opacity="0.26"/>
<path d="M696.50 637.50A171.00 119.99 0 0 1 720.31 576.42" opacity="0.34"/>
<path d="M1014.69 576.42A171.00 119.99 0 0 1 1038.50 637.50" opacity="0.34"/>
<path d="M700.50 651.50A167.00 117.18 0 0 1 723.76 591.85" opacity="0.26"/>
<path d="M1011.24 591.85A167.00 117.18 0 0 1 1034.50 651.50" opacity="0.26"/>
<path d="M696.50 670.00A171.00 119.99 0 0 1 720.31 608.92" opacity="0.34"/>
<path d="M1014.69 608.92A171.00 119.99 0 0 1 1038.50 670.00" opacity="0.34"/>
<path d="M700.50 684.00A167.00 117.18 0 0 1 723.76 624.35" opacity="0.26"/>
<path d="M1011.24 624.35A167.00 117.18 0 0 1 1034.50 684.00" opacity="0.26"/>
<path d="M696.50 702.50A171.00 119.99 0 0 1 720.31 641.42" opacity="0.34"/>
<path d="M1014.69 641.42A171.00 119.99 0 0 1 1038.50 702.50" opacity="0.34"/>
<path d="M700.50 716.50A167.00 117.18 0 0 1 723.76 656.85" opacity="0.26"/>
<path d="M1011.24 656.85A167.00 117.18 0 0 1 1034.50 716.50" opacity="0.26"/>
<path d="M696.50 735.00A171.00 119.99 0 0 1 720.31 673.92" opacity="0.34"/>
<path d="M1014.69 673.92A171.00 119.99 0 0 1 1038.50 735.00" opacity="0.34"/>
<path d="M700.50 749.00A167.00 117.18 0 0 1 723.76 689.35" opacity="0.26"/>
<path d="M1011.24 689.35A167.00 117.18 0 0 1 1034.50 749.00" opacity="0.26"/>
<path d="M696.50 767.50A171.00 119.99 0 0 1 720.31 706.42" opacity="0.34"/>
<path d="M1014.69 706.42A171.00 119.99 0 0 1 1038.50 767.50" opacity="0.34"/>
<path d="M700.50 781.50A167.00 117.18 0 0 1 723.76 721.85" opacity="0.26"/>
<path d="M1011.24 721.85A167.00 117.18 0 0 1 1034.50 781.50" opacity="0.26"/>
<path d="M696.50 800.00A171.00 119.99 0 0 1 720.31 738.92" opacity="0.34"/>
<path d="M1014.69 738.92A171.00 119.99 0 0 1 1038.50 800.00" opacity="0.34"/>
<path d="M700.50 814.00A167.00 117.18 0 0 1 723.76 754.35" opacity="0.26"/>
<path d="M1011.24 754.35A167.00 117.18 0 0 1 1034.50 814.00" opacity="0.26"/>
</g>
<path d="M905.9 374.6L805.1 359.1L665.9 466.0L728.3 603.9L829.1 619.4L828.5 619.6 L817.1 617.5 L806.0 615.0 L795.2 611.9 L784.6 608.3 L774.5 604.3 L764.7 599.8 L755.3 594.9 L746.5 589.5 L738.1 583.8 L730.3 577.7 L723.1 571.2 L716.5 564.4 L710.5 557.4 L705.3 550.1 L700.7 542.5 L696.8 534.8 L693.6 526.9 L691.2 518.8 L689.6 510.7 L688.7 502.5 L688.5 494.3 L689.2 486.1 L690.6 478.0 L692.7 469.9 L695.6 462.0 L699.2 454.2 L703.6 446.6 L708.6 439.2 L714.3 432.0 L720.7 425.1 L727.7 418.5 L735.3 412.3 L743.5 406.4 L752.2 400.9 L761.4 395.9 L771.0 391.2 L781.0 387.0 L791.5 383.3 L802.2 380.1 L813.2 377.3 L824.5 375.1 L835.9 373.4 L847.5 372.2 L859.1 371.5 L870.8 371.4 L882.5 371.8 L894.1 372.8 L905.6 374.3Z" fill="#a8d4f5" fill-opacity="0.17"/>
<path d="M905.9 374.6L805.1 359.1L665.9 466.0L728.3 603.9L829.1 619.4" fill="none" stroke="#4fb3e8" stroke-width="1.6" stroke-linejoin="miter"/>
<path d="M828.5 619.6 L817.1 617.5 L806.0 615.0 L795.2 611.9 L784.6 608.3 L774.5 604.3 L764.7 599.8 L755.3 594.9 L746.5 589.5 L738.1 583.8 L730.3 577.7 L723.1 571.2 L716.5 564.4 L710.5 557.4 L705.3 550.1 L700.7 542.5 L696.8 534.8 L693.6 526.9 L691.2 518.8 L689.6 510.7 L688.7 502.5 L688.5 494.3 L689.2 486.1 L690.6 478.0 L692.7 469.9 L695.6 462.0 L699.2 454.2 L703.6 446.6 L708.6 439.2 L714.3 432.0 L720.7 425.1 L727.7 418.5 L735.3 412.3 L743.5 406.4 L752.2 400.9 L761.4 395.9 L771.0 391.2 L781.0 387.0 L791.5 383.3 L802.2 380.1 L813.2 377.3 L824.5 375.1 L835.9 373.4 L847.5 372.2 L859.1 371.5 L870.8 371.4 L882.5 371.8 L894.1 372.8 L905.6 374.3" fill="none" stroke="#070707" stroke-width="1.6"/>
<path d="M905.9 374.6L1006.7 390.1L1069.1 528.0L929.9 634.9L829.1 619.4L828.5 619.6 L840.0 621.1 L851.6 622.1 L863.3 622.6 L875.1 622.5 L886.8 621.9 L898.4 620.7 L909.9 619.0 L921.2 616.8 L932.2 614.1 L943.0 610.9 L953.5 607.1 L963.6 603.0 L973.3 598.3 L982.5 593.2 L991.3 587.7 L999.5 581.9 L1007.1 575.6 L1014.2 569.0 L1020.6 562.1 L1026.3 554.9 L1031.4 547.5 L1035.7 539.9 L1039.4 532.1 L1042.3 524.1 L1044.4 516.0 L1045.8 507.8 L1046.5 499.6 L1046.3 491.4 L1045.4 483.1 L1043.7 475.0 L1041.3 466.9 L1038.1 459.0 L1034.2 451.3 L1029.6 443.7 L1024.3 436.4 L1018.3 429.3 L1011.6 422.5 L1004.3 416.0 L996.5 409.9 L988.1 404.2 L979.2 398.8 L969.8 393.9 L959.9 389.4 L949.7 385.4 L939.1 381.9 L928.2 378.8 L917.0 376.3 L905.6 374.3Z" fill="#146cff" fill-opacity="0.56"/>
<path d="M905.9 374.6L1006.7 390.1L1069.1 528.0L929.9 634.9" fill="none" stroke="#1f62c4" stroke-width="2.2" stroke-linejoin="miter"/>
<path d="M1069.1 528.0L929.9 634.9L829.1 619.4" fill="none" stroke="#b4b4b4" stroke-width="3.4" stroke-linejoin="round" stroke-linecap="round" clip-path="url(#cBody)"/>
<path d="M905.4 375.5 L916.7 377.5 L927.8 380.0 L938.6 383.0 L949.1 386.5 L959.3 390.5 L969.1 394.9 L978.4 399.8 L987.3 405.1 L995.6 410.8 L1003.4 416.8 L1010.6 423.2 L1017.2 429.9 L1023.2 436.9 L1028.5 444.2 L1033.1 451.7 L1037.0 459.4 L1040.1 467.2 L1042.6 475.2 L1044.2 483.3 L1045.1 491.4 L1045.3 499.6 L1044.6 507.7 L1043.3 515.8 L1041.1 523.8 L1038.2 531.7 L1034.6 539.5 L1030.3 547.0 L1025.2 554.4 L1019.5 561.5 L1013.2 568.3 L1006.2 574.9 L998.6 581.0 L990.4 586.9 L981.8 592.3 L972.6 597.3 L963.0 601.9 L952.9 606.1 L942.5 609.8 L931.8 613.0 L920.8 615.7 L909.6 617.9 L898.2 619.5 L886.6 620.7 L875.0 621.3 L863.4 621.4 L851.7 620.9 L840.2 619.9 L828.7 618.4" fill="none" stroke="#b4b4b4" stroke-width="5" stroke-linecap="round"/>
<path d="M907.8 374.4 L919.0 376.5 L930.1 379.1 L940.9 382.2 L951.3 385.8 L961.5 389.9 L971.2 394.4 L980.5 399.3 L989.3 404.7 L997.6 410.5 L1005.3 416.6 L1012.5 423.0 L1019.0 429.8 L1024.9 436.9 L1030.1 444.2 L1034.7 451.7 L1038.5 459.4 L1041.6 467.3 L1044.0 475.3 L1045.7 483.4 L1046.5 491.6 L1046.7 499.8 L1046.0 508.0 L1044.6 516.1 L1042.5 524.1 L1039.6 532.0 L1036.0 539.8 L1031.7 547.4 L1026.7 554.8 L1021.0 562.0 L1014.6 568.8 L1007.7 575.4 L1000.1 581.6 L992.0 587.5 L983.3 593.0 L974.2 598.1 L964.6 602.7 L954.6 606.9 L944.3 610.7 L933.6 613.9 L922.6 616.7 L911.4 619.0 L900.0 620.7 L888.5 621.9 L876.9 622.6 L865.2 622.8 L853.6 622.4 L842.0 621.5 L830.5 620.1" fill="none" stroke="#ff0000" stroke-width="1.8" stroke-linecap="round"/>
<circle cx="867.7" cy="497.0" r="4.1" fill="#000"/>
<circle cx="930.5" cy="635.1" r="6.2" fill="#fff" opacity="0.7" filter="url(#blur1)"/>
<circle cx="930.5" cy="635.1" r="3.9" fill="#fff" stroke="#3a3a3a" stroke-width="1.2"/>
</svg>
<div class="a" style="left:0;top:0;width:1920px;height:1px;background:#e3e3e3"></div>
<svg id="viewcube" style="left:1800px;top:24px" width="120" height="100" viewBox="1800 160 120 100">
<defs><filter id="vcb" x="-30%" y="-30%" width="160%" height="160%"><feGaussianBlur stdDeviation="3"/></filter><filter id="vct" x="-10%" y="-10%" width="120%" height="120%"><feGaussianBlur stdDeviation="0.450"/></filter></defs>
<path d="M1838 232l40 6l6 -38l-6 -30" fill="#000" opacity="0.100" filter="url(#vcb)"/>
<path d="M1825 196.500L1838.500 165.500L1884.500 171L1878.500 204Z" fill="#f0f0f0" fill-opacity="0.930"/>
<path d="M1825 196.500L1878.500 204L1874.500 238L1828.500 230.500Z" fill="#ededed" fill-opacity="0.930"/>
<path d="M1878.500 204L1884.500 171L1881 208L1874.500 238Z" fill="#dcdcdc" fill-opacity="0.930"/>
<g filter="url(#vct)">
<path d="M1825 196.500L1838.500 165.500L1884.500 171L1878.500 204L1825 196.500M1878.500 204L1874.500 238" fill="none" stroke="#6a6a6a" stroke-width="0.700" stroke-dasharray="7 2.500" opacity="0.850"/>
<path d="M1823 191L1828.800 230.800" stroke="#3d3df0" stroke-width="1.800" fill="none"/>
<path d="M1828.800 230.800L1882.500 239.800" stroke="#f08585" stroke-width="1.800" fill="none"/>
</g>
<g filter="url(#vct)" font-family="'Liberation Sans',sans-serif">
<text x="0" y="0" transform="matrix(0.960 0.140 -0.300 0.900 1848 184.800)" font-size="9.500" fill="#7a7f8a" textLength="19.500" lengthAdjust="spacingAndGlyphs">TOP</text>
<text x="0" y="0" transform="matrix(0.980 0.150 -0.080 0.990 1834.800 218.500)" font-size="10" fill="#7a7f8a" textLength="33.500" lengthAdjust="spacingAndGlyphs">FRONT</text>
<text x="1817.500" y="187" font-size="13" font-weight="bold" fill="#6b6bf5" textLength="7.500" lengthAdjust="spacingAndGlyphs">Z</text>
<text x="1885.500" y="246" font-size="13" font-weight="bold" fill="#f59a9a" textLength="7.500" lengthAdjust="spacingAndGlyphs">X</text>
</g></svg>
</div>
<div class="a" id="titlebar" style="left:0;top:0;width:1920px;height:23px;background:#fff">
<svg style="left:0;top:0" width="1920" height="23" viewBox="0 0 1920 23">
<defs><linearGradient id="gApp" x1="0" y1="0" x2="1" y2="1"><stop offset="0" stop-color="#fdecd9"/><stop offset="1" stop-color="#f9dcbd"/></linearGradient></defs>
<rect x="2.5" y="3.5" width="15" height="15" rx="1.5" fill="url(#gApp)"/>
<path d="M7.2 14.6V5.9c0-0.700 0.400-1.100 1.100-1.100h5.700v2.300H10v2.200h3v2.200h-3v3.100c0 0.800-0.600 1.200-1.400 1.200c-0.800 0-1.400-0.400-1.400-1.200z" fill="#d9771f"/>
<path d="M7.2 14.600V5.900c0-0.700 0.400-1.100 1.100-1.100h0.900v9.800c0 0.800-0.400 1.200-1 1.200c-0.600 0-1-0.400-1-1.200z" fill="#f0a040"/>
<rect x="11" y="16.200" width="4.400" height="1.300" rx="0.600" fill="#f3b36a"/>
<path d="M1799 10.5h10.4" stroke="#111" stroke-width="1.1"/>
<rect x="1844" y="7.3" width="8" height="8" rx="1.6" fill="none" stroke="#111" stroke-width="1.1"/>
<path d="M1846.2 7.2v-0.3a1.6 1.6 0 0 1 1.6 -1.6h4.7a1.6 1.6 0 0 1 1.6 1.6v4.7a1.6 1.6 0 0 1 -1.6 1.6h-0.3" fill="none" stroke="#111" stroke-width="1.1"/>
<path d="M1890.2 5.2l9.8 9.8M1900 5.2l-9.8 9.8" stroke="#111" stroke-width="1.15"/>
</svg>
<span class="t" style="left:22.50px;top:2.94px;font-size:12px;line-height:18px;color:#000;font-weight:normal;transform:scaleX(0.9810);">Autodesk Fusion 360 (Personal - Not for Commercial Use)</span>
</div>
<div class="a" id="qat" style="left:0;top:23px;width:1920px;height:32px;background:#cdcdcd">
<div class="a" style="left:193px;top:4px;width:1442px;height:28px;background:#f2f2f2;border-radius:4px 4px 0 0"></div>
<div class="a" style="left:1639px;top:4px;width:28px;height:28px;background:#b4b4b4;border-radius:4px 4px 0 0"></div>
<div class="a" style="left:1883px;top:4px;width:24px;height:24px;background:#f0f0f0;border-radius:12px"></div>
<svg style="left:0;top:0" width="1920" height="32" viewBox="0 23 1920 32">
<rect x="9.0" y="32.0" width="4" height="4" rx="0.6" fill="#5c5c5c"/>
<rect x="14.1" y="32.0" width="4" height="4" rx="0.6" fill="#5c5c5c"/>
<rect x="19.2" y="32.0" width="4" height="4" rx="0.6" fill="#5c5c5c"/>
<rect x="9.0" y="37.1" width="4" height="4" rx="0.6" fill="#5c5c5c"/>
<rect x="14.1" y="37.1" width="4" height="4" rx="0.6" fill="#5c5c5c"/>
<rect x="19.2" y="37.1" width="4" height="4" rx="0.6" fill="#5c5c5c"/>
<rect x="9.0" y="42.2" width="4" height="4" rx="0.6" fill="#5c5c5c"/>
<rect x="14.1" y="42.2" width="4" height="4" rx="0.6" fill="#5c5c5c"/>
<rect x="19.2" y="42.2" width="4" height="4" rx="0.6" fill="#5c5c5c"/>
<path d="M43 31h7.2l4.8 4.8V46.2a0.8 0.8 0 0 1 -0.8 0.8H42.8a0.8 0.8 0 0 1 -0.8 -0.8V32a1 1 0 0 1 1 -1z" fill="#5c5c5c"/>
<path d="M50.6 31.2l4.2 4.2h-4.2z" fill="#cdcdcd"/><path d="M51.3 32.3l2.6 2.6h-2.6z" fill="#5c5c5c"/>
<path d="M61 36.2h7.4l-3.7 4.7z" fill="#5c5c5c"/>
<path d="M87.2 32.2h11l2.8 2.8v10.8H87.2z" fill="#8e8e8e"/>
<rect x="90.3" y="32.2" width="5.6" height="4.6" fill="#cdcdcd"/><rect x="93.6" y="33" width="1.5" height="3" fill="#8e8e8e"/>
<rect x="90.6" y="40.6" width="7" height="5.2" fill="#cdcdcd"/><rect x="91.6" y="41.6" width="5" height="4.2" fill="#8e8e8e"/><rect x="91.6" y="41.6" width="5" height="1" fill="#cdcdcd"/>
<rect x="91.6" y="42.4" width="5" height="3.4" fill="#cdcdcd"/><rect x="92.4" y="43" width="3.4" height="2.8" fill="#8e8e8e" opacity="0"/>
<circle cx="98.1" cy="35.2" r="4.1" fill="#0a96e0"/>
<path d="M97.6 33v4.4M96 36l1.6 1.6l1.6-1.6" stroke="#fff" stroke-width="1.1" fill="none"/><path d="M99.6 33.4l1.6 0.7l-1.6 0.7z" fill="#fff"/>
<path d="M126.2 33.8l-4.6 4.2l4.6 4.2" fill="none" stroke="#5c5c5c" stroke-width="1.9" stroke-linejoin="miter"/>
<path d="M122 38h6.4a4.3 4.3 0 0 1 4.3 4.3v2.4" fill="none" stroke="#5c5c5c" stroke-width="1.9"/>
<path d="M140.3 36.2h7.4l-3.7 4.7z" fill="#5c5c5c"/>
<path d="M167.4 33.8l4.6 4.2l-4.6 4.2" fill="none" stroke="#8c8c8c" stroke-width="1.9"/>
<path d="M171.6 38h-6.4a4.3 4.3 0 0 0 -4.3 4.3v2.4" fill="none" stroke="#8c8c8c" stroke-width="1.9"/>
<path d="M179 36.2h7.4l-3.7 4.7z" fill="#8c8c8c"/>
<rect x="874.6" y="40.2" width="11.4" height="8.6" rx="1" fill="#7d7d7d"/>
<path d="M877 40.4v-2a3.3 3.3 0 0 1 6.6 0v2" fill="none" stroke="#7d7d7d" stroke-width="1.5"/>
<path d="M876.4 42.8h7.8M876.4 44.8h7.8M876.4 46.8h7.8" stroke="#d6d6d6" stroke-width="0.8"/>
<path d="M1619.6 36.6l8.4 8.4M1628 36.6l-8.4 8.4" stroke="#6b6b6b" stroke-width="1.4"/>
<path d="M1646.8 40.6h13M1653.3 34.1v13" stroke="#6a6a6a" stroke-width="2.2"/>
<path d="M1678.8 31h8.2l4.6 4.6v4.2l-6.8 6.8l-0.6 0.6h-5.4z" fill="#5c5c5c"/>
<path d="M1687.4 31.2l4.2 4.2h-4.2z" fill="#cdcdcd"/><path d="M1688 32.6l2.4 2.4h-2.4z" fill="#5c5c5c"/>
<path d="M1685.2 47.2l0.8-3l6.6-6.6l2.2 2.2l-6.6 6.6z" fill="#5c5c5c" stroke="#cdcdcd" stroke-width="0.9"/>
<circle cx="1772" cy="39.5" r="7.6" fill="none" stroke="#5c5c5c" stroke-width="1.3"/><circle cx="1772" cy="39.5" r="5.6" fill="#5c5c5c"/>
<path d="M1772 36v3.7h3.2" fill="none" stroke="#cdcdcd" stroke-width="1.2"/>
<path d="M1815 44.4c1.6-1.2 1.8-3 1.8-5.4c0-2.6 1.4-4.6 4-4.6s4 2 4 4.6c0 2.4 0.2 4.2 1.8 5.4v0.8h-11.6z" fill="#5c5c5c"/>
<path d="M1819 46.2h3.6l-1.8 1.6z" fill="#5c5c5c"/><path d="M1819.8 33.2h2v2h-2z" fill="#5c5c5c"/>
<circle cx="1825.3" cy="34.9" r="2.7" fill="#0a96e0"/>
<circle cx="1853.8" cy="39.5" r="8" fill="#5c5c5c"/>
</svg>
<span class="t" style="left:894.30px;top:10.24px;font-size:12px;line-height:18px;color:#3c3c3c;font-weight:normal;transform:scaleX(1.0252);">Untitled*</span>
<span class="t" style="left:1698.80px;top:7.24px;font-size:12px;line-height:18px;color:#3c3c3c;font-weight:normal;transform:scaleX(0.8993);">10 of 10</span>
<span class="t" style="left:1783.80px;top:7.24px;font-size:12px;line-height:18px;color:#3c3c3c;font-weight:normal;transform:scaleX(0.7792);">1</span>
<span class="t" style="left:1850.40px;top:6.50px;font-size:13px;line-height:20px;color:#cbcbcb;font-weight:bold;transform:scaleX(0.8816);">?</span>
<span class="t" style="left:1885.40px;top:8.36px;font-size:10.5px;line-height:16px;color:#3c3c3c;font-weight:normal;transform:scaleX(0.9598);">AU</span>
</div>
<div class="a" id="ribbon" style="left:0;top:55px;width:1920px;height:81px;background:#f2f2f2">
<div class="a" style="left:12px;top:10.500px;width:109.500px;height:60.500px;border:1px solid #dcdcdc;border-radius:5px;background:#f2f2f2"></div>
<div class="a" style="left:138.500px;top:21.700px;width:54.200px;height:2.900px;background:#0696d7;border-radius:1.500px"></div>
<div class="a" style="left:393.1px;top:27px;width:1.400px;height:50.500px;background:#dadada"></div>
<div class="a" style="left:662.2px;top:27px;width:1.400px;height:50.500px;background:#dadada"></div>
<div class="a" style="left:759.1px;top:27px;width:1.400px;height:50.500px;background:#dadada"></div>
<div class="a" style="left:858.1px;top:27px;width:1.400px;height:50.500px;background:#dadada"></div>
<div class="a" style="left:937.2px;top:27px;width:1.400px;height:50.500px;background:#dadada"></div>
<div class="a" style="left:1006.2px;top:27px;width:1.400px;height:50.500px;background:#dadada"></div>
<svg style="left:0;top:0" width="1920" height="81" viewBox="0 55 1920 81">
<rect x="137.0" y="82.0" width="3" height="3" fill="#585858"/>
<rect x="164.0" y="82.0" width="3" height="3" fill="#585858"/>
<rect x="137.0" y="109.0" width="3" height="3" fill="#585858"/>
<rect x="144.0" y="89.0" width="3" height="3" fill="#585858"/>
<rect x="157.0" y="89.0" width="3" height="3" fill="#585858"/>
<rect x="144.0" y="102.0" width="3" height="3" fill="#585858"/>
<path d="M141.5 83.5L162.5 83.5" fill="none" stroke="#585858" stroke-width="1.1" /><path d="M138.5 86.5L138.5 107.5" fill="none" stroke="#585858" stroke-width="1.1" /><path d="M165.5 86.5L165.5 100.0" fill="none" stroke="#585858" stroke-width="1.1" /><path d="M141.5 110.5L155.0 110.5" fill="none" stroke="#585858" stroke-width="1.1" /><path d="M148.5 90.5L155.5 90.5" fill="none" stroke="#585858" stroke-width="1.1" /><path d="M145.5 93.5L145.5 100.5" fill="none" stroke="#585858" stroke-width="1.1" />
<path d="M158.3 93.4C157.6 99 154 102.4 148.6 103.4" fill="none" stroke="#585858" stroke-width="1.1"/>
<path d="M160 100.2h4v5h5v4h-5v5h-4v-5h-5v-4h5z" fill="#27b455" stroke="#1e9e45" stroke-width="0.6"/>
<path d="M181.0 88.0L186.8 82.2L204.8 82.2L199.0 88.0Z" fill="#8ccbfa" /><path d="M199.0 88.0L204.8 82.2L204.8 103.1L199.0 108.9Z" fill="#4793cd" /><path d="M181.0 88.0L199.0 88.0L199.0 108.9L181.0 108.9Z" fill="#69ade3" />
<path d="M181.0 110.1L199.0 110.1L199.0 113.7L181.0 113.7Z" fill="#b5b5b5" />
<path d="M199.0 110.1L204.8 104.3L204.8 107.9L199.0 113.7Z" fill="#a3a3a3" />
<path d="M208.4 85.5L208.4 107.8" fill="none" stroke="#222" stroke-width="1.2" /><path d="M208.4 82.8L210.9 87.0L205.9 87.0Z" fill="#222" />
<path d="M252.8 89.6C246 82.6 233 81.6 225.6 87.8" fill="none" stroke="#222" stroke-width="1"/>
<path d="M223.4 90.2L226.2 85.6L228.6 89.0Z" fill="#222" />
<path d="M223 95.6C231 87.2 246 87.2 254.4 95L248 100.8C242 96.2 235 96.2 229 101.6Z" fill="#8ccbfa"/>
<path d="M229 101.6C235 96.2 242 96.2 248 100.8V110.2C242 105.8 235 105.8 229 111.2Z" fill="#69ade3"/>
<path d="M223.0 95.6L229.0 101.6L229.0 111.2L223.0 105.2Z" fill="#4793cd" />
<path d="M249.3 101.2L254.6 96V104.6L249.3 110.2Z" fill="#fff" stroke="#585858" stroke-width="1.1" stroke-linejoin="miter"/>
<path d="M266.4 89.8L273.9 82.3L297.7 82.3L290.2 89.8Z" fill="#f4f4f4" /><path d="M290.2 89.8L297.7 82.3L297.7 106.0L290.2 113.5Z" fill="#bcbcbc" /><path d="M266.4 89.8L290.2 89.8L290.2 113.5L266.4 113.5Z" fill="#dbdbdb" />
<path d="M266.4 113.5L266.4 89.8L273.9 82.3L297.7 82.3L297.7 106.0L290.2 113.5Z" fill="none" stroke="#585858" stroke-width="1.2" />
<circle cx="278.1" cy="101.8" r="8.6" fill="#f7f7f7" stroke="#585858" stroke-width="1"/>
<path d="M277 95.2C272.6 96 270.8 100.6 272 104.4C273.4 108.6 278.6 110.2 282.2 108C284.4 106.6 285.2 104.6 285.4 102.6C280.6 102.2 277.4 99.4 277 95.2Z" fill="#69ade3"/>
<rect x="309.6" y="84.5" width="6" height="6" fill="#fff" stroke="#585858" stroke-width="1.1"/>
<rect x="330.1" y="84.1" width="6.9" height="6.9" fill="#69ade3" stroke="#5aa2dd" stroke-width="0.5"/>
<rect x="309.1" y="105.1" width="6.9" height="6.9" fill="#69ade3" stroke="#5aa2dd" stroke-width="0.5"/>
<rect x="330.1" y="105.1" width="6.9" height="6.9" fill="#69ade3" stroke="#5aa2dd" stroke-width="0.5"/>
<path d="M317.2 87.4L328.8 87.4" fill="none" stroke="#585858" stroke-width="1.1" /><path d="M312.5 92.2L312.5 103.8" fill="none" stroke="#585858" stroke-width="1.1" /><path d="M317.2 108.5L328.8 108.5" fill="none" stroke="#585858" stroke-width="1.1" />
<path d="M360.6 84.2h10.4l2 3.4l7.6 10.6c1.6 2 1.4 6.6 0 8.4l-4.8 5.6c-1.2 1.2-2.6 1.8-4.4 1.8h-10.8c-4.6 0-8.2-3.2-8.2-8.2v-11c0-2.6 0.6-4 2.2-5.6c1.6-1.8 3.4-3.6 6-5z" fill="#d9c3fb" stroke="#8e63c9" stroke-width="0.8"/>
<path d="M359 84.8c3-0.8 9-0.8 11.4-0.2l-3.6 4.4h-10c-1.6 0-2.6 0.4-3.6 1.2c1.6-2.2 3.6-4.2 5.800-5.400z" fill="#c39dfb"/>
<rect x="354.2" y="93.2" width="20" height="19" rx="4.6" fill="#aa7fe9"/>
<path d="M375.600 100l5 -4.600c1 2.600 1 8 -0.200 9.800l-4.800 5.600z" fill="#9468d4"/>
<path d="M362.4 85v28M353 101.800h21.600" stroke="#8e63c9" stroke-width="0.7" fill="none" opacity="0.85"/>
<path d="M375.5 82.3L376.6 87.9L381.4 84.7L378.2 89.5L383.8 90.6L378.2 91.7L381.4 96.5L376.6 93.3L375.5 98.9L374.4 93.3L369.6 96.5L372.8 91.7L367.2 90.6L372.8 89.5L369.6 84.7L374.4 87.9Z" fill="#ffa800" stroke="#e89a10" stroke-width="0.4"/>
<path d="M407.4 88.3L413.2 82.4L419.0 82.4L413.0 88.3Z" fill="#f4f4f4" />
<path d="M407.4 88.3L413.4 88.3L413.4 113.5L407.4 113.5Z" fill="#dbdbdb" />
<path d="M412.8 113.4L407.5 113.4L407.5 88.4L413.4 82.5L418.0 82.5" fill="none" stroke="#585858" stroke-width="1.2" />
<path d="M414.2 88.0L420.0 82.2L428.8 82.2L423.0 88.0Z" fill="#8ccbfa" /><path d="M423.0 88.0L428.8 82.2L428.8 107.9L423.0 113.7Z" fill="#4793cd" /><path d="M414.2 88.0L423.0 88.0L423.0 113.7L414.2 113.7Z" fill="#69ade3" />
<rect x="425.6" y="95.6" width="3.6" height="3.6" fill="#fff"/>
<path d="M426.6 97.4L433.0 97.4" fill="none" stroke="#222" stroke-width="1.2" /><path d="M436.2 97.4L431.8 100.0L431.8 94.8Z" fill="#222" />
<path d="M449.4 89.7L456.6 82.4L467.4 82.4L461.4 88.6Z" fill="#f4f4f4" />
<path d="M449.4 89.7H461C468 90.4 472.600 95.600 473.300 102.600V113.400H449.400Z" fill="#dbdbdb"/>
<path d="M473.3 102.6L480.7 96.0L480.7 106.0L473.3 113.4Z" fill="#bcbcbc" />
<path d="M467.2 82.200C474.400 83.400 480 88.800 481 95.600L474.200 102C473.400 95 468 89.600 461 88.600Z" fill="#69ade3"/>
<path d="M466.0 82.5L456.7 82.5L449.5 89.7L449.5 113.3L473.3 113.3L480.6 106.0L480.6 96.4" fill="none" stroke="#585858" stroke-width="1.2" />
<path d="M492.4 89.8L499.8 82.4L523.7 82.4L516.3 89.8Z" fill="#f4f4f4" /><path d="M516.3 89.8L523.7 82.4L523.7 106.0L516.3 113.4Z" fill="#bcbcbc" /><path d="M492.4 89.8L516.3 89.8L516.3 113.4L492.4 113.4Z" fill="#dbdbdb" />
<path d="M492.4 113.4L492.4 89.8L499.8 82.4L523.7 82.4L523.7 106.0L516.3 113.4Z" fill="none" stroke="#585858" stroke-width="1.2" />
<rect x="495" y="92.800" width="18.200" height="18" fill="#f4f4f4"/>
<path d="M496.2 94.0L503.9 94.0L503.9 102.0L496.2 109.8Z" fill="#4793cd" />
<path d="M503.9 102.0L511.9 102.0L511.9 109.8L496.2 109.8Z" fill="#8ccbfa" />
<path d="M535.0 96.0L539.0 92.0L546.0 92.0L546.0 96.0Z" fill="#8ccbfa" />
<path d="M535.0 96.0L553.0 96.0L553.0 113.6L535.0 113.6Z" fill="#69ade3" />
<path d="M553.0 103.0L557.0 103.0L557.0 109.8L553.0 113.6Z" fill="#4793cd" />
<path d="M545.2 86.2L549.2 82.2L567.0 82.2L563.0 86.2Z" fill="#8ccbfa" /><path d="M563.0 86.2L567.0 82.2L567.0 99.4L563.0 103.4Z" fill="#4793cd" /><path d="M545.2 86.2L563.0 86.2L563.0 103.4L545.2 103.4Z" fill="#69ade3" />
<path d="M580.2 88.2L586.1 82.3L607.9 82.3L602.0 88.2Z" fill="#8ccbfa" /><path d="M602.0 88.2L607.9 82.3L607.9 91.9L602.0 97.8Z" fill="#4793cd" /><path d="M580.2 88.2L602.0 88.2L602.0 97.8L580.2 97.8Z" fill="#69ade3" />
<path d="M580.6 103.2L602.0 103.2L602.0 112.6L580.6 112.6Z" fill="#dbdbdb" />
<path d="M602.0 103.2L607.6 97.8L607.6 107.0L602.0 112.6Z" fill="#bcbcbc" />
<path d="M580.6 103.2L580.6 112.5L602.0 112.5L607.5 107.0L607.5 99.0" fill="none" stroke="#585858" stroke-width="1.1" />
<path d="M578.0 100.4L602.4 100.4L610.0 92.8" fill="none" stroke="#1c8fea" stroke-width="1.3" />
<path d="M627.0 97.8L647.0 97.8" fill="none" stroke="#2b2b2b" stroke-width="2.6" /><path d="M637.0 88.0L637.0 108.0" fill="none" stroke="#2b2b2b" stroke-width="2.6" />
<path d="M637.0 82.4L642.1 89.8L631.9 89.8Z" fill="#2b2b2b" /><path d="M637.0 113.4L642.1 106.0L631.9 106.0Z" fill="#2b2b2b" />
<path d="M621.4 97.8L628.8 92.7L628.8 102.9Z" fill="#2b2b2b" /><path d="M652.6 97.8L645.2 92.7L645.2 102.9Z" fill="#2b2b2b" />
<path d="M675.2 90.2L679.1 86.3L691.3 86.3L687.4 90.2Z" fill="#8ccbfa" /><path d="M687.4 90.2L691.3 86.3L691.3 98.0L687.4 101.9Z" fill="#4793cd" /><path d="M675.2 90.2L687.4 90.2L687.4 101.9L675.2 101.9Z" fill="#69ade3" />
<path d="M675.4 102.0L699.0 102.0L699.0 113.3L675.4 113.3Z" fill="#dbdbdb" />
<path d="M687.4 102.0L691.3 98.5L702.6 98.5L699.0 102.0Z" fill="#f4f4f4" />
<path d="M699.0 102.0L702.6 98.5L702.6 109.8L699.0 113.3Z" fill="#bcbcbc" />
<path d="M675.4 102.0L675.4 113.3L699.0 113.3L702.6 109.8L702.6 98.5L691.4 98.5L687.4 102.2L687.4 113.3" fill="none" stroke="#585858" stroke-width="1.2" />
<path d="M698.5 82.2L699.6 87.8L704.4 84.6L701.2 89.4L706.8 90.5L701.2 91.6L704.4 96.4L699.6 93.2L698.5 98.8L697.4 93.2L692.6 96.4L695.8 91.6L690.2 90.5L695.8 89.4L692.6 84.6L697.4 87.8Z" fill="#ffa800" stroke="#e89a10" stroke-width="0.4"/>
<path d="M720.500 91.600L727.600 84.800V105L720.500 110.800Z" fill="#cfcfcf" stroke="#585858" stroke-width="1.1" stroke-linejoin="round"/>
<path d="M727.600 85.400C727.600 83.600 732.500 83.600 732.500 85.400V95.400C732.500 97.200 727.600 97.200 727.600 95.400Z" fill="#e4e4e4" stroke="#585858" stroke-width="1.1"/>
<ellipse cx="730" cy="85.900" rx="1.500" ry="0.700" fill="#585858"/>
<path d="M741 86.600L747.600 92.600V111.400L741 105.800Z" fill="#e0e0e0" stroke="#585858" stroke-width="1.1" stroke-linejoin="round"/>
<path d="M735.500 95.200C735.500 93.400 741 93.400 741 95.200V104.200C741 106 735.500 106 735.500 104.200Z" fill="#cfcfcf" stroke="#585858" stroke-width="1.1"/>
<path d="M729.5 97.4L729.5 101.8" fill="none" stroke="#1c8fea" stroke-width="1.2" /><path d="M738.4 90.2L738.4 95.6" fill="none" stroke="#1c8fea" stroke-width="1.2" />
<path d="M795.5 91.2L804.0 82.5L811.4 82.5L803.0 91.2Z" fill="#f4f4f4" />
<path d="M795.5 91.2L803.0 91.2L803.0 112.4L795.5 112.4Z" fill="#dbdbdb" />
<path d="M803.0 112.4L795.5 112.4L795.5 91.2L804.2 82.5L811.0 82.5" fill="none" stroke="#585858" stroke-width="1.2" />
<path d="M804.2 91.5L812.8 82.3L812.8 103.5L804.2 112.8Z" fill="#5cc77f" stroke="#4cb971" stroke-width="0.6"/>
<path d="M816.2 91.5L824.8 82.3L824.8 103.5L816.2 112.8Z" fill="#e79e66" stroke="#d98c52" stroke-width="0.6"/>
<rect x="885" y="100" width="28" height="5.800" fill="#ffa800" stroke="#f09a00" stroke-width="0.4"/>
<rect x="885.8" y="100" width="0.9" height="1.6" fill="#666"/>
<rect x="889.0" y="100" width="0.9" height="2.6" fill="#666"/>
<rect x="892.2" y="100" width="0.9" height="1.6" fill="#666"/>
<rect x="895.4" y="100" width="0.9" height="2.6" fill="#666"/>
<rect x="898.6" y="100" width="0.9" height="1.6" fill="#666"/>
<rect x="901.8" y="100" width="0.9" height="2.6" fill="#666"/>
<rect x="905.0" y="100" width="0.9" height="1.6" fill="#666"/>
<rect x="908.2" y="100" width="0.9" height="2.6" fill="#666"/>
<rect x="911.4" y="100" width="0.9" height="1.6" fill="#666"/>
<path d="M885.5 90.0L885.5 98.8" fill="none" stroke="#666" stroke-width="1.1" /><path d="M912.5 90.0L912.5 98.8" fill="none" stroke="#666" stroke-width="1.1" /><path d="M888.0 94.4L910.0 94.4" fill="none" stroke="#666" stroke-width="1.1" />
<path d="M886.4 94.4L890.2 91.9L890.2 96.9Z" fill="#666" /><path d="M911.6 94.4L907.8 91.9L907.8 96.9Z" fill="#666" />
<rect x="958.300" y="83.300" width="28.400" height="28.400" fill="#87cbfd" stroke="#4a9ad8" stroke-width="0.8"/>
<path d="M958.700 102C961.500 98 964 95.200 966.500 95.200C970 95.200 973 102 976.600 105.300C978.200 103 979.800 101.500 981.400 101.500C983.400 101.500 985 103.600 986.300 106.200V111.300H958.700Z" fill="#3f92c9"/>
<circle cx="979" cy="91" r="3.100" fill="#ffffcf"/>
<rect x="1026" y="79" width="38" height="38" fill="#0696d7"/>
<path d="M1033 84.600L1050 84.300L1059.500 93.700L1041 93.900Z" fill="#5cc77f" stroke="#4aae6a" stroke-width="0.5"/>
<path d="M1042.200 84.800L1050.300 93.500" stroke="#3d9a5a" stroke-width="0.9" fill="none"/>
<path d="M1033 85C1030.800 86.200 1029.500 88 1029.500 90.400V101L1038.400 110.400V98C1038.400 96 1039.400 94.600 1041 93.900Z" fill="#f4f4f4" stroke="#5a4a44" stroke-width="0.9" stroke-linejoin="round"/>
<path d="M1029.600 92.700L1038.400 100.700" stroke="#5a4a44" stroke-width="0.9" fill="none"/>
<path d="M1054.200 104.400L1059.400 99" stroke="#8a8a8a" stroke-width="2.600" fill="none"/>
<path d="M1043.600 111.600C1047 108 1049 104.600 1052.400 104.300C1053.600 104.300 1054.200 105.400 1053.800 106.600C1053 109.400 1048.600 111.400 1043.600 111.600Z" fill="#a0712f"/>
<path d="M84.800 93.900h6.400l-3.200 4.200z" fill="#2f2f2f"/>
<path d="M277.2 124.400h5.600l-2.800 3.700z" fill="#2f2f2f"/>
<path d="M545.2 124.400h5.600l-2.800 3.700z" fill="#2f2f2f"/>
<path d="M737.2 124.400h5.600l-2.800 3.700z" fill="#2f2f2f"/>
<path d="M839.3 124.400h5.600l-2.800 3.700z" fill="#2f2f2f"/>
<path d="M917.2 124.400h5.600l-2.800 3.700z" fill="#2f2f2f"/>
<path d="M990.2 124.400h5.600l-2.800 3.700z" fill="#2f2f2f"/>
<path d="M1062.2 124.400h5.600l-2.800 3.700z" fill="#2f2f2f"/>
</svg>
<span class="t" style="left:42.30px;top:33.22px;font-size:11.5px;line-height:17px;color:#3a3a3a;font-weight:bold;transform:scaleX(0.8528);">DESIGN</span>
<span class="t" style="left:150.70px;top:3.09px;font-size:11px;line-height:16px;color:#0696d7;font-weight:normal;transform:scaleX(0.8876);">SOLID</span>
<span class="t" style="left:228.60px;top:3.09px;font-size:11px;line-height:16px;color:#3c3c3c;font-weight:normal;transform:scaleX(0.8931);">SURFACE</span>
<span class="t" style="left:321.30px;top:3.09px;font-size:11px;line-height:16px;color:#3c3c3c;font-weight:normal;transform:scaleX(0.8558);">MESH</span>
<span class="t" style="left:394.10px;top:3.09px;font-size:11px;line-height:16px;color:#3c3c3c;font-weight:normal;transform:scaleX(0.8993);">SHEET METAL</span>
<span class="t" style="left:507.30px;top:3.09px;font-size:11px;line-height:16px;color:#3c3c3c;font-weight:normal;transform:scaleX(0.9030);">PLASTIC</span>
<span class="t" style="left:595.30px;top:3.09px;font-size:11px;line-height:16px;color:#3c3c3c;font-weight:normal;transform:scaleX(0.8453);">UTILITIES</span>
<span class="t" style="left:235.40px;top:63.89px;font-size:11px;line-height:16px;color:#3c3c3c;font-weight:normal;transform:scaleX(0.8767);">CREATE</span>
<span class="t" style="left:503.50px;top:63.89px;font-size:11px;line-height:16px;color:#3c3c3c;font-weight:normal;transform:scaleX(0.8673);">MODIFY</span>
<span class="t" style="left:679.40px;top:63.89px;font-size:11px;line-height:16px;color:#3c3c3c;font-weight:normal;transform:scaleX(0.9123);">ASSEMBLE</span>
<span class="t" style="left:774.40px;top:63.89px;font-size:11px;line-height:16px;color:#3c3c3c;font-weight:normal;transform:scaleX(0.8863);">CONSTRUCT</span>
<span class="t" style="left:873.10px;top:63.89px;font-size:11px;line-height:16px;color:#3c3c3c;font-weight:normal;transform:scaleX(0.8516);">INSPECT</span>
<span class="t" style="left:952.30px;top:63.89px;font-size:11px;line-height:16px;color:#3c3c3c;font-weight:normal;transform:scaleX(0.8620);">INSERT</span>
<span class="t" style="left:1021.30px;top:63.89px;font-size:11px;line-height:16px;color:#3c3c3c;font-weight:normal;transform:scaleX(0.8810);">SELECT</span>
</div>
<div class="a" id="overlays" style="left:0;top:136px;width:1920px;height:847px;pointer-events:none">
<div class="a" id="browser" style="left:0;top:5px;width:310px;height:225px">
<div class="a" style="left:4px;top:0;width:300px;height:24.500px;background:#f2f2f2;border:1px solid #c3c3c3"></div>
<div class="a" style="left:40.1px;top:30.1px;width:147.9px;height:19.500px;background:rgba(240,240,240,0.93)"></div>
<div class="a" style="left:58px;top:54.1px;width:133.7px;height:19.500px;background:rgba(240,240,240,0.93)"></div>
<div class="a" style="left:58px;top:78.1px;width:110.0px;height:19.500px;background:rgba(240,240,240,0.93)"></div>
<div class="a" style="left:58px;top:102.1px;width:94.8px;height:19.500px;background:rgba(240,240,240,0.93)"></div>
<div class="a" style="left:58px;top:126.1px;width:102.9px;height:19.500px;background:rgba(240,240,240,0.93)"></div>
<div class="a" style="left:76.2px;top:150.2px;width:90.7px;height:19.500px;background:rgba(240,240,240,0.93)"></div>
<div class="a" style="left:76.2px;top:174.2px;width:90.7px;height:19.500px;background:rgba(240,240,240,0.93)"></div>
<div class="a" style="left:58px;top:198.2px;width:115.0px;height:19.500px;background:rgba(240,240,240,0.93)"></div>
<div class="a" style="left:65.100px;top:32.200px;width:97.900px;height:15.800px;background:#969696"></div>
<svg style="left:0;top:0" width="310" height="225" viewBox="0 141 310 225">
<defs><linearGradient id="gTri" x1="0" y1="0" x2="1" y2="1"><stop offset="0.3" stop-color="#f2f2f2"/><stop offset="1" stop-color="#3a3a3a"/></linearGradient><linearGradient id="gBodyIc" x1="0" y1="0" x2="1" y2="0"><stop offset="0" stop-color="#9ea4ad"/><stop offset="1" stop-color="#f4f5f7"/></linearGradient><linearGradient id="gCube" x1="0" y1="0" x2="1" y2="1"><stop offset="0" stop-color="#f6f7f9"/><stop offset="1" stop-color="#cdd1d8"/></linearGradient></defs>
<path d="M14.200 150.700v6.300l-5 -3.150zM19.300 150.700v6.300l-5 -3.150z" fill="#2c2c2c"/>
<circle cx="287" cy="153.300" r="4" fill="#1e1e1e"/><path d="M284.700 153.300h4.600" stroke="#fff" stroke-width="1.2"/>
<path d="M299.800 147.500v12" stroke="#8a8a8a" stroke-width="0.9"/><path d="M301.400 149.500v8" stroke="#8a8a8a" stroke-width="0.9"/>
<path d="M21 186.6H32V176.0Z" fill="url(#gTri)" stroke="#1e1e1e" stroke-width="0.8"/>
<path d="M43 181C46.2 175 55.8 175 59 181C55.8 187 46.2 187 43 181Z" fill="#979797"/><circle cx="51" cy="181" r="3.3" fill="#e6e6e6"/><circle cx="51" cy="181" r="1.9" fill="#979797"/>
<path d="M69 177.400l3 -3.400h11.600v11.400l-3 3.400h-11.600z" fill="url(#gCube)" stroke="#2c2c2c" stroke-width="1.1" stroke-linejoin="round"/>
<path d="M69 177.400h11.600v11.400M80.600 177.400l3 -3.400" fill="none" stroke="#fff" stroke-width="0.8" opacity="0.9"/>
<circle cx="173.400" cy="181.500" r="6" fill="#fff" stroke="#1e1e1e" stroke-width="1"/><circle cx="173.400" cy="181.500" r="2.400" fill="#1e1e1e"/>
<path d="M40.900000000000006 199.0L48.6 205.3L40.900000000000006 211.60000000000002Z" fill="#eaeaea" stroke="#2c2c2c" stroke-width="1.2" stroke-linejoin="miter"/><path d="M74.55 203.76L76.80 203.76L76.80 206.24L74.55 206.24L73.80 208.05L75.39 209.64L73.64 211.39L72.05 209.80L70.24 210.55L70.24 212.80L67.76 212.80L67.76 210.55L65.95 209.80L64.36 211.39L62.61 209.64L64.20 208.05L63.45 206.24L61.20 206.24L61.20 203.76L63.45 203.76L64.20 201.95L62.61 200.36L64.36 198.61L65.95 200.20L67.76 199.45L67.76 197.20L70.24 197.20L70.24 199.45L72.05 200.20L73.64 198.61L75.39 200.36L73.80 201.95Z" fill="#979797"/><circle cx="69" cy="205" r="5.57" fill="#979797"/><circle cx="69" cy="205" r="2.84" fill="#f0f0f0"/>
<path d="M40.900000000000006 223.0L48.6 229.3L40.900000000000006 235.60000000000002Z" fill="#eaeaea" stroke="#2c2c2c" stroke-width="1.2" stroke-linejoin="miter"/><path d="M61 223h7.2l1 2h8v10.7h-16.2z" fill="#979797"/><path d="M61 224.9h8" stroke="#f0f0f0" stroke-width="0.7"/>
<path d="M40.900000000000006 246.89999999999998L48.6 253.2L40.900000000000006 259.5Z" fill="#eaeaea" stroke="#2c2c2c" stroke-width="1.2" stroke-linejoin="miter"/><path d="M61.4 253C64.4 247.6 73.6 247.6 76.6 253C73.6 258.4 64.4 258.4 61.4 253Z" fill="none" stroke="#a6a6a6" stroke-width="0.9"/><circle cx="69" cy="253" r="2.7" fill="none" stroke="#a6a6a6" stroke-width="0.9"/><path d="M63.4 247.4L74.6 258.6" stroke="#8c8c8c" stroke-width="0.9"/><path d="M86 246.6h7.2l1 2h8v10.7h-16.2z" fill="#979797"/><path d="M86 248.5h8" stroke="#f0f0f0" stroke-width="0.7"/>
<path d="M39 282.6H50V272.0Z" fill="url(#gTri)" stroke="#1e1e1e" stroke-width="0.8"/><path d="M61 277C64.2 271 73.8 271 77 277C73.8 283 64.2 283 61 277Z" fill="#979797"/><circle cx="69" cy="277" r="3.3" fill="#e6e6e6"/><circle cx="69" cy="277" r="1.9" fill="#979797"/><path d="M86 270.4h7.2l1 2h8v10.7h-16.2z" fill="#979797"/><path d="M86 272.29999999999995h8" stroke="#f0f0f0" stroke-width="0.7"/>
<path d="M79.4 301C82.4 295.6 91.6 295.6 94.6 301C91.6 306.4 82.4 306.4 79.4 301Z" fill="none" stroke="#a6a6a6" stroke-width="0.9"/><circle cx="87" cy="301" r="2.7" fill="none" stroke="#a6a6a6" stroke-width="0.9"/><path d="M81.4 295.4L92.6 306.6" stroke="#8c8c8c" stroke-width="0.9"/><rect x="104.7" y="293.6" width="14.8" height="15" rx="4" fill="#fff" stroke="#333" stroke-width="1.2"/><rect x="108.6" y="299" width="7.6" height="8.6" fill="url(#gBodyIc)"/>
<path d="M79 325C82.2 319 91.8 319 95 325C91.8 331 82.2 331 79 325Z" fill="#979797"/><circle cx="87" cy="325" r="3.3" fill="#e6e6e6"/><circle cx="87" cy="325" r="1.9" fill="#979797"/><rect x="104.7" y="317.6" width="14.8" height="15" rx="4" fill="#fff" stroke="#333" stroke-width="1.2"/><rect x="108.6" y="323" width="7.6" height="8.6" fill="url(#gBodyIc)"/>
<path d="M40.900000000000006 342.9L48.6 349.2L40.900000000000006 355.5Z" fill="#eaeaea" stroke="#2c2c2c" stroke-width="1.2" stroke-linejoin="miter"/><path d="M61 349C64.2 343 73.8 343 77 349C73.8 355 64.2 355 61 349Z" fill="#979797"/><circle cx="69" cy="349" r="3.3" fill="#e6e6e6"/><circle cx="69" cy="349" r="1.9" fill="#979797"/><path d="M86 342.5h7.2l1 2h8v10.7h-16.2z" fill="#979797"/><path d="M86 344.4h8" stroke="#f0f0f0" stroke-width="0.7"/>
<path d="M83.0 357.200l3 -2.800M88.8 357.200l3 -2.800M94.7 357.200l3 -2.800M100.5 357.200l3 -2.800M106.4 357.200l3 -2.800M112.2 357.200l3 -2.800M118.1 357.200l3 -2.800M123.9 357.200l3 -2.800M129.8 357.200l3 -2.800M135.7 357.200l3 -2.800M141.5 357.200l3 -2.800M147.3 357.200l3 -2.800M153.2 357.200l3 -2.800M159.1 357.200l3 -2.800M164.9 357.200l3 -2.800" stroke="#5b80b6" stroke-width="1.500" fill="none"/>
</svg>
<span class="t" style="left:29.40px;top:4.29px;font-size:11px;line-height:16px;color:#5a5a5a;font-weight:normal;transform:scaleX(0.9078);">BROWSER</span>
<span class="t" style="left:98.40px;top:32.29px;font-size:11px;line-height:16px;color:#fff;font-weight:bold;transform:scaleX(1.0249);">(Unsaved)</span>
<span class="t" style="left:91.10px;top:56.19px;font-size:11px;line-height:16px;color:#2e2e2e;font-weight:normal;transform:scaleX(0.9685);">Document Settings</span>
<span class="t" style="left:91.10px;top:80.09px;font-size:11px;line-height:16px;color:#2e2e2e;font-weight:normal;transform:scaleX(1.0021);">Named Views</span>
<span class="t" style="left:116.30px;top:104.19px;font-size:11px;line-height:16px;color:#2e2e2e;font-weight:normal;transform:scaleX(0.9304);">Origin</span>
<span class="t" style="left:116.30px;top:128.19px;font-size:11px;line-height:16px;color:#2e2e2e;font-weight:normal;transform:scaleX(0.9663);">Bodies</span>
<span class="t" style="left:134.30px;top:152.09px;font-size:11px;line-height:16px;color:#2e2e2e;font-weight:normal;transform:scaleX(0.9684);">Barb</span>
<span class="t" style="left:134.30px;top:176.09px;font-size:11px;line-height:16px;color:#2e2e2e;font-weight:normal;transform:scaleX(0.8976);">Male</span>
<span class="t" style="left:116.30px;top:200.09px;font-size:11px;line-height:16px;color:#2e2e2e;font-weight:normal;transform:scaleX(0.9858);">Sketches</span>
</div>
<div class="a" id="readonly" style="left:753px;top:5.300px;width:415.300px;height:23.700px;background:#f2f2f2">
<div class="a" style="left:279.600px;top:0.500px;width:1.300px;height:22px;background:#d4d4d4"></div>
<svg style="left:0;top:0" width="416" height="24" viewBox="753 141.300 416 24">
<rect x="757.800" y="151.200" width="12.200" height="8.600" rx="0.800" fill="#e02227"/>
<path d="M760.700 151.400v-1.800a3.200 3.200 0 0 1 6.400 0v1.800" fill="none" stroke="#e02227" stroke-width="1.700"/>
<rect x="763.300" y="153.800" width="1.300" height="3.400" rx="0.600" fill="#fff"/>
</svg>
<span class="t" style="left:25.50px;top:3.79px;font-size:11px;line-height:16px;color:#2e2e2e;font-weight:bold;transform:scaleX(0.9818);">Read-Only:</span>
<span class="t" style="left:105.10px;top:3.79px;font-size:11px;line-height:16px;color:#2e2e2e;font-weight:normal;transform:scaleX(0.9691);">Document limit has been reached</span>
<span class="t" style="left:293.40px;top:3.79px;font-size:11px;line-height:16px;color:#1878c4;font-weight:normal;transform:scaleX(0.9496);">My Editable Documents</span>
</div>
<div class="a" id="navbar" style="left:841.500px;top:818px;width:236px;height:23.800px;background:#f2f2f2">
<svg style="left:0;top:0" width="236" height="24" viewBox="841.500 952.600 236 24">
<path d="M851.800 958.200v13.600M850.600 971.800h2.400" stroke="#2c2c2c" stroke-width="1" fill="none"/><path d="M851.800 956.800l2.400 3.400h-4.800z" fill="#fff" stroke="#2c2c2c" stroke-width="0.800"/><path d="M848.600 969.800c-5 -1.200 -4.600 -5.400 3.200 -5.600c7.600 0 8.400 4.400 3.400 5.600" fill="none" stroke="#2c2c2c" stroke-width="1.100"/><path d="M845.600 969.600l3.400 -1.800v3.800z" fill="#2c2c2c"/>
<path d="M865.3 963.5999999999999h5.200l-2.600 3.600z" fill="#2c2c2c"/>
<path d="M879.400 961.400l4.600 -3l2 1.800l4.600 -1.800v3" fill="#bdbdbd" stroke="#4a4a4a" stroke-width="0.900" stroke-linejoin="round"/><rect x="877.400" y="961.400" width="15.200" height="10.600" fill="#f4f4f4" stroke="#4a4a4a" stroke-width="1.100"/><rect x="880.400" y="965.200" width="9.200" height="3.800" fill="#aeb9cc" stroke="#4a4a4a" stroke-width="0.900"/>
<path d="M906.600 965.800c-1.400 -1.400 -3 -0.400 -2.200 1l3.200 4.800c0.800 1 1.800 1.400 3 1.400h3.400c2 0 3.200 -1.200 3.400 -3l0.800 -5.600c0.200 -1.600 -1.800 -1.800 -2 -0.400l-0.200 -3.600c0 -1.400 -1.800 -1.400 -2 0l-0.200 -1.600c-0.200 -1.400 -2 -1.400 -2.200 0l-0.200 1c-0.200 -1.400 -2.200 -1.200 -2.200 0.200l0.200 7.400z" fill="#fdfdfd" stroke="#3a3a3a" stroke-width="0.900" stroke-linejoin="round"/><path d="M911.200 959.200v5.200M913.600 959.600v4.800M916 961.400v3.400" stroke="#3a3a3a" stroke-width="0.700" fill="none"/>
<circle cx="934.600" cy="963.400" r="4.600" fill="#eef2f6" stroke="#3a3a3a" stroke-width="1.200"/><path d="M938 966.800l4 4.200" stroke="#3a3a3a" stroke-width="2.200" stroke-linecap="round"/><path d="M940.600 960.200h4.400M942.800 958v4.400M940.600 964.400h4.400" stroke="#2c2c2c" stroke-width="0.900"/>
<rect x="955.300" y="958.200" width="14.600" height="14.400" fill="none" stroke="#3a3a3a" stroke-width="0.900" stroke-dasharray="2 1.600"/><circle cx="961.600" cy="964.400" r="5.600" fill="#eef2f6" stroke="#3a3a3a" stroke-width="1.200"/><path d="M965.800 968.600l4.200 4.200" stroke="#3a3a3a" stroke-width="2.400" stroke-linecap="round"/>
<path d="M977 963.5999999999999h5.200l-2.600 3.600z" fill="#2c2c2c"/>
<rect x="988.600" y="958.400" width="15" height="11" rx="0.800" fill="#f4f4f4" stroke="#3a3a3a" stroke-width="1.100"/><rect x="990.400" y="960.200" width="11.400" height="7.400" fill="#9db4dc" stroke="#6f86b0" stroke-width="0.500"/><path d="M994.600 969.600h3l0.600 2h2v1.200h-8.200v-1.200h2z" fill="#c8c8c8" stroke="#6a6a6a" stroke-width="0.500"/>
<path d="M1007.6 963.5999999999999h5.200l-2.600 3.600z" fill="#2c2c2c"/>
<rect x="1019.600" y="958.400" width="15" height="14.800" fill="#dfe3ea" stroke="#4a4a4a" stroke-width="0.900"/><path d="M1023.350 958.400v14.800M1027.100 958.400v14.800M1030.850 958.400v14.800M1019.600 962.100h15M1019.600 965.800h15M1019.600 969.500h15" stroke="#4a4a4a" stroke-width="0.800" fill="none"/>
<path d="M1038.4 963.5999999999999h5.200l-2.600 3.600z" fill="#2c2c2c"/>
<rect x="1050.4" y="959.2" width="6.900" height="6" rx="0.800" fill="#b9c8e6" stroke="#3c5ea2" stroke-width="1"/><rect x="1052.1000000000001" y="961.0" width="3.500" height="2.400" fill="#8fa6d6"/>
<rect x="1058.3" y="959.2" width="6.900" height="6" rx="0.800" fill="#b9c8e6" stroke="#3c5ea2" stroke-width="1"/><rect x="1060.0" y="961.0" width="3.500" height="2.400" fill="#8fa6d6"/>
<rect x="1050.4" y="966.2" width="6.900" height="6" rx="0.800" fill="#b9c8e6" stroke="#3c5ea2" stroke-width="1"/><rect x="1052.1000000000001" y="968.0" width="3.500" height="2.400" fill="#8fa6d6"/>
<rect x="1058.3" y="966.2" width="6.900" height="6" rx="0.800" fill="#b9c8e6" stroke="#3c5ea2" stroke-width="1"/><rect x="1060.0" y="968.0" width="3.500" height="2.400" fill="#8fa6d6"/>
<path d="M1069 963.5999999999999h5.200l-2.600 3.600z" fill="#2c2c2c"/>
</svg></div>
<div class="a" id="comments" style="left:4px;top:817px;width:300px;height:24.500px;background:#f2f2f2;border:1px solid #c3c3c3"></div>
<svg style="left:280px;top:820px" width="26" height="18" viewBox="280 956 26 18"><circle cx="287" cy="965.200" r="4" fill="#1e1e1e"/><path d="M284.700 965.200h4.600M287 962.900v4.600" stroke="#fff" stroke-width="1.100"/><path d="M299.800 959.500v12" stroke="#8a8a8a" stroke-width="0.900"/><path d="M301.400 961.500v8" stroke="#8a8a8a" stroke-width="0.900"/></svg>
<span class="t" style="left:29.40px;top:821.29px;font-size:11px;line-height:16px;color:#5a5a5a;font-weight:normal;transform:scaleX(0.8821);">COMMENTS</span>
<span class="t" style="left:1852.30px;top:821.82px;font-size:11.5px;line-height:17px;color:#1e1e1e;font-weight:bold;transform:scaleX(0.9851);font-weight:600;">3 Profiles</span>
</div>
<div class="a" id="timeline" style="left:0;top:982px;width:1920px;height:50px;background:#f2f2f2">
<div class="a" style="left:0;top:0;width:1920px;height:1.500px;background:#cdcdcd"></div>
<svg style="left:0;top:0" width="1920" height="50" viewBox="0 982 1920 50">
<rect x="11" y="1000.800" width="2.200" height="14" fill="#3a3a3a"/><path d="M13.4 1007.8L23.0 1001.0L23.0 1014.6Z" fill="#3a3a3a" />
<path d="M35.4 1007.8L45.0 1001.4L45.0 1014.2Z" fill="#3a3a3a" /><rect x="46.200" y="1004.800" width="2" height="6" fill="#3a3a3a"/>
<path d="M61.0 1000.0L72.8 1007.8L61.0 1015.6Z" fill="#3a3a3a" />
<rect x="84.600" y="1004.800" width="2" height="6" fill="#3a3a3a"/><path d="M88.0 1001.4L97.6 1007.8L88.0 1014.2Z" fill="#3a3a3a" />
<path d="M111.0 1001.0L120.6 1007.8L111.0 1014.6Z" fill="#3a3a3a" /><rect x="121" y="1000.800" width="2.200" height="14" fill="#3a3a3a"/>
<path d="M154 1018V1023.700H466V1018M178 1018V1023.700M202 1018V1023.700M226 1018V1023.700M250 1018V1023.700M274 1018V1023.700M298 1018V1023.700M322 1018V1023.700M346 1018V1023.700M370 1018V1023.700M394 1018V1023.700M418 1018V1023.700M442 1018V1023.700" fill="none" stroke="#c6c6c6" stroke-width="1.600"/>
<path d="M146 1002.400V1011.800C146 1016 162 1016 162 1011.800V1002.400Z" fill="#69ade3"/><ellipse cx="154" cy="1002.400" rx="8" ry="3.300" fill="#8ccbfa"/><path d="M170 1002.400V1011.800C170 1016 186 1016 186 1011.800V1002.400Z" fill="#69ade3"/><ellipse cx="178" cy="1002.400" rx="8" ry="3.300" fill="#8ccbfa"/><path d="M194.0 1001.6L197.0 998.6L206.2 998.6L203.2 1001.6Z" fill="#8ccbfa" /><path d="M203.2 1001.6L206.2 998.6L206.2 1008.7L203.2 1011.7Z" fill="#4793cd" /><path d="M194.0 1001.6L203.2 1001.6L203.2 1011.7L194.0 1011.7Z" fill="#69ade3" /><path d="M194.0 1012.4L203.2 1012.4L206.2 1009.6L206.2 1011.8L203.2 1014.6L194.0 1014.6Z" fill="#b5b5b5" /><path d="M208.6 1001.4L208.6 1012.0" fill="none" stroke="#222" stroke-width="1" /><path d="M208.6 999.6L210.2 1002.4L207.0 1002.4Z" fill="#222" /><path d="M218.0 1001.6L221.0 998.6L230.2 998.6L227.2 1001.6Z" fill="#8ccbfa" /><path d="M227.2 1001.6L230.2 998.6L230.2 1008.7L227.2 1011.7Z" fill="#4793cd" /><path d="M218.0 1001.6L227.2 1001.6L227.2 1011.7L218.0 1011.7Z" fill="#69ade3" /><path d="M218.0 1012.4L227.2 1012.4L230.2 1009.6L230.2 1011.8L227.2 1014.6L218.0 1014.6Z" fill="#b5b5b5" /><path d="M232.6 1001.4L232.6 1012.0" fill="none" stroke="#222" stroke-width="1" /><path d="M232.6 999.6L234.2 1002.4L231.0 1002.4Z" fill="#222" /><path d="M242.6 1008.400V1006.800L249.6 999.600H253.4C255.8 999.600 257.6 1001.400 257.6 1003.800V1014.400H246.6C244.2 1014.400 242.6 1012 242.6 1010Z" fill="#dbdbdb" stroke="#585858" stroke-width="1"/><path d="M243.2 1006.4L249.4 1000.0L252.0 1000.0L245.4 1009.4Z" fill="#f4f4f4" /><path d="M242.8 1005.6L248.4 999.8L252.2 1002.4L246.0 1008.8Z" fill="#69ade3" /><path d="M266.6 1008.400V1006.800L273.6 999.600H277.4C279.8 999.600 281.6 1001.400 281.6 1003.800V1014.400H270.6C268.2 1014.400 266.6 1012 266.6 1010Z" fill="#dbdbdb" stroke="#585858" stroke-width="1"/><path d="M267.2 1006.4L273.4 1000.0L276.0 1000.0L269.4 1009.4Z" fill="#f4f4f4" /><path d="M266.8 1005.6L272.4 999.8L276.2 1002.4L270.0 1008.8Z" fill="#69ade3" /><path d="M290.6 1008.400V1006.800L297.6 999.600H301.4C303.8 999.600 305.6 1001.400 305.6 1003.800V1014.400H294.6C292.2 1014.400 290.6 1012 290.6 1010Z" fill="#dbdbdb" stroke="#585858" stroke-width="1"/><path d="M291.2 1006.4L297.4 1000.0L300.0 1000.0L293.4 1009.4Z" fill="#f4f4f4" /><path d="M290.8 1005.6L296.4 999.8L300.2 1002.4L294.0 1008.8Z" fill="#69ade3" />
<path d="M314.0 1005.6L316.4 1003.2L320.0 1003.2L320.0 1005.6Z" fill="#8ccbfa" /><path d="M314.0 1005.6L323.4 1005.6L323.4 1014.8L314.0 1014.8Z" fill="#69ade3" /><path d="M323.4 1009.6L325.8 1009.6L325.8 1012.4L323.4 1014.8Z" fill="#4793cd" /><path d="M319.6 1001.4L322.0 999.0L330.0 999.0L327.6 1001.4Z" fill="#8ccbfa" /><path d="M327.6 1001.4L330.0 999.0L330.0 1007.2L327.6 1009.6Z" fill="#4793cd" /><path d="M319.6 1001.4L327.6 1001.4L327.6 1009.6L319.6 1009.6Z" fill="#69ade3" />
<path d="M338 1002.400V1011.800C338 1016 354 1016 354 1011.800V1002.400Z" fill="#69ade3"/><ellipse cx="346" cy="1002.400" rx="8" ry="3.300" fill="#8ccbfa"/>
<rect x="365.300" y="999.600" width="10.600" height="14.800" fill="#f7f7f7" stroke="#9a9a9a" stroke-width="1"/><path d="M365.300 1013.800h10.600" stroke="#b5b5b5" stroke-width="1.400"/>
<path d="M363 1005.4L378.200 1002.0" stroke="#1c8fea" stroke-width="1.100"/><path d="M363 1008.0L378.200 1004.6" stroke="#1c8fea" stroke-width="1.100"/><path d="M363 1010.6L378.200 1007.2" stroke="#1c8fea" stroke-width="1.100"/><path d="M363 1013.2L378.200 1009.8000000000001" stroke="#1c8fea" stroke-width="1.100"/>
<path d="M391.0 1002.0L394.0 999.4L401.4 999.4L401.4 1006.8L398.8 1009.0Z" fill="#4793cd" /><path d="M391.0 1002.0L394.0 999.4L401.4 999.4L399.0 1002.0Z" fill="#69ade3" /><rect x="386.6" y="1002.200" width="12.300" height="12.300" fill="#fff" stroke="#585858" stroke-width="1.100"/><rect x="389.2" y="1004.800" width="7.100" height="7.100" fill="#fff" stroke="#585858" stroke-width="1.100"/><path d="M415.0 1002.0L418.0 999.4L425.4 999.4L425.4 1006.8L422.8 1009.0Z" fill="#4793cd" /><path d="M415.0 1002.0L418.0 999.4L425.4 999.4L423.0 1002.0Z" fill="#69ade3" /><rect x="410.6" y="1002.200" width="12.300" height="12.300" fill="#fff" stroke="#585858" stroke-width="1.100"/><rect x="413.2" y="1004.800" width="7.100" height="7.100" fill="#fff" stroke="#585858" stroke-width="1.100"/>
<path d="M434.600 1014.400V1003.600L438.200 999.800H442C446 1000.400 448.400 1003 449.200 1007V1011.200L446.200 1014.400Z" fill="#dbdbdb" stroke="#585858" stroke-width="1"/><path d="M441 999.400C446 999.600 449.800 1003.400 450 1008L447 1010.600C446.600 1006 443.800 1002.800 439.200 1001.800Z" fill="#69ade3"/><path d="M446.400 1011L449.200 1008.600V1011.400L446.400 1014.200Z" fill="#bcbcbc"/>
<rect x="454" y="995" width="23.300" height="24" rx="2.200" fill="#0696d7"/>
<rect x="459.400" y="1000.200" width="12.600" height="12.400" fill="none" stroke="#5a6670" stroke-width="1.100" stroke-dasharray="8.600 4"/>
<circle cx="459.400" cy="1000.200" r="0.900" fill="#2f7fd0"/><circle cx="472" cy="1000.200" r="0.900" fill="#2f7fd0"/><circle cx="459.400" cy="1012.600" r="0.900" fill="#2f7fd0"/>
<path d="M467.600 1012.600l4.600 -4.400l1.800 1.800l-4.600 4.400z" fill="#f5c242"/><path d="M472.200 1008.200l0.800 -0.800c0.600 -0.600 2.400 1.200 1.800 1.800l-0.800 0.800z" fill="#e8433a"/><path d="M467.600 1012.600l1.800 1.800l-2.600 0.800z" fill="#5a5a5a"/>
<path d="M472.400 993.200H484.200V995L479.600 1000.600H477.200L472.400 995Z" fill="#5c5c5c"/><rect x="477.300" y="999" width="2" height="25.700" fill="#5c5c5c"/>
<path d="M1904.76 1007.01L1907.10 1007.02L1907.10 1009.58L1904.76 1009.59L1903.98 1011.46L1905.63 1013.12L1903.82 1014.93L1902.16 1013.28L1900.29 1014.06L1900.28 1016.40L1897.72 1016.40L1897.71 1014.06L1895.84 1013.28L1894.18 1014.93L1892.37 1013.12L1894.02 1011.46L1893.24 1009.59L1890.90 1009.58L1890.90 1007.02L1893.24 1007.01L1894.02 1005.14L1892.37 1003.48L1894.18 1001.67L1895.84 1003.32L1897.71 1002.54L1897.72 1000.20L1900.28 1000.20L1900.29 1002.54L1902.16 1003.32L1903.82 1001.67L1905.63 1003.48L1903.98 1005.14Z" fill="#8c8c8c"/><circle cx="1899" cy="1008.3" r="5.79" fill="#8c8c8c"/><circle cx="1899" cy="1008.3" r="2.95" fill="#f2f2f2"/>
</svg></div>
<div class="a" id="taskbar" style="left:0;top:1032px;width:1920px;height:48px;background:#1f1f1f">
<div class="a" style="left:1254px;top:4px;width:35px;height:40px;border-radius:4px;background:#2b2b2b"></div>
<div class="a" style="left:1249.500px;top:4px;width:35px;height:40px;border-radius:4px;background:#2e2e2e;box-shadow:1px 0 0 #262626"></div>
<svg style="left:0;top:0" width="1920" height="48" viewBox="0 1032 1920 48">
<defs>
<linearGradient id="gWin" x1="0" y1="0" x2="1" y2="1"><stop offset="0" stop-color="#7be6ff"/><stop offset="1" stop-color="#0a8af2"/></linearGradient>
<linearGradient id="gTv" x1="0" y1="0" x2="1" y2="1"><stop offset="0" stop-color="#ffffff"/><stop offset="1" stop-color="#cfcfcf"/></linearGradient>
<linearGradient id="gChat" x1="0" y1="0" x2="1" y2="1"><stop offset="0" stop-color="#8f6ad8"/><stop offset="1" stop-color="#5d6fd8"/></linearGradient>
<linearGradient id="gFold" x1="0" y1="0" x2="0" y2="1"><stop offset="0" stop-color="#ffd966"/><stop offset="1" stop-color="#f5b82e"/></linearGradient>
<linearGradient id="gEdge" x1="0" y1="0" x2="1" y2="1"><stop offset="0" stop-color="#35c1f1"/><stop offset="0.500" stop-color="#1b8fd8"/><stop offset="1" stop-color="#0c59a4"/></linearGradient>
<linearGradient id="gEdge2" x1="0" y1="1" x2="1" y2="0"><stop offset="0" stop-color="#1f9ad8"/><stop offset="1" stop-color="#6fdc6a"/></linearGradient>
<linearGradient id="gAtom" x1="0" y1="0" x2="0" y2="1"><stop offset="0" stop-color="#6fd6a0"/><stop offset="1" stop-color="#2f9d6b"/></linearGradient>
<linearGradient id="gXa" x1="0" y1="0" x2="0" y2="1"><stop offset="0" stop-color="#fb9a3c"/><stop offset="1" stop-color="#ee6f12"/></linearGradient>
<linearGradient id="gFus" x1="0" y1="0" x2="1" y2="1"><stop offset="0" stop-color="#fbe6cf"/><stop offset="1" stop-color="#f3c699"/></linearGradient>
<linearGradient id="gF" x1="0" y1="0" x2="1" y2="0"><stop offset="0" stop-color="#f9b44c"/><stop offset="1" stop-color="#e56a0e"/></linearGradient>
<linearGradient id="gGear" x1="0" y1="0" x2="0" y2="1"><stop offset="0" stop-color="#a9b3c0"/><stop offset="1" stop-color="#6f7a88"/></linearGradient>
<linearGradient id="gInk" x1="0" y1="0" x2="1" y2="1"><stop offset="0" stop-color="#ffffff"/><stop offset="0.450" stop-color="#8aa4c8"/><stop offset="1" stop-color="#0b0b0b"/></linearGradient>
</defs>
<rect x="597" y="1045" width="11" height="11" rx="0.600" fill="url(#gWin)"/>
<rect x="609" y="1045" width="11" height="11" rx="0.600" fill="url(#gWin)"/>
<rect x="597" y="1057" width="11" height="11" rx="0.600" fill="url(#gWin)"/>
<rect x="609" y="1057" width="11" height="11" rx="0.600" fill="url(#gWin)"/>
<circle cx="653.600" cy="1054" r="8.300" fill="#4a4a4a" stroke="#f2f2f2" stroke-width="2.200"/><path d="M647.600 1060.400l-4 5.200" stroke="#e0e0e0" stroke-width="2.600" stroke-linecap="round"/>
<rect x="691" y="1045" width="18.300" height="16.300" rx="1.500" fill="url(#gTv)"/><rect x="685" y="1051" width="18.300" height="16" rx="1.500" fill="#7c7c7c" fill-opacity="0.920"/>
<rect x="729.500" y="1045" width="23.600" height="22.200" rx="2" fill="#0f5fb6"/><rect x="731.200" y="1046.800" width="9" height="18.600" rx="1" fill="#f4f4f4"/><rect x="742.200" y="1046.800" width="9" height="9.600" rx="0.800" fill="#66d0ff"/><rect x="742.200" y="1057.600" width="9" height="3.400" fill="#1e9af0"/><rect x="742.200" y="1062" width="9" height="3.400" fill="#0a78d6"/>
<circle cx="785" cy="1055.400" r="11.400" fill="url(#gChat)"/><path d="M775.600 1061l-2 5.400l6.400 -2z" fill="#5d5fc8"/><rect x="778.200" y="1051.600" width="9.600" height="8" rx="1.600" fill="#fff"/><path d="M788.600 1055.600l3.600 -2.800v5.600z" fill="#fff"/>
<path d="M817.200 1046.600c0 -0.800 0.600 -1.200 1.200 -1.200h6.600l2.200 2.400h13c0.800 0 1.200 0.600 1.200 1.200v16.400c0 0.800 -0.600 1.200 -1.200 1.200h-21.800c-0.800 0 -1.200 -0.600 -1.200 -1.200z" fill="#e9a520"/><rect x="817.200" y="1048.600" width="24.200" height="18" rx="1.200" fill="url(#gFold)"/><path d="M821.600 1066.600v-5c0 -1.200 0.800 -2 2 -2h11.400c1.200 0 2 0.800 2 2v5z" fill="#1a7fd4"/><rect x="824.600" y="1062.400" width="9.400" height="1.600" rx="0.800" fill="#0d5fa8"/>
<rect x="826.3" y="1072.3" width="6" height="2.6" rx="1.3" fill="#9b9b9b"/>
<circle cx="873" cy="1055.600" r="11" fill="#f4f4f4"/><path d="M863.400 1061l-1.400 5.800l6 -1.600z" fill="#f4f4f4"/><circle cx="873" cy="1055.600" r="9.200" fill="#2fc24c"/><path d="M868.600 1051.400c0.800 -1.200 2 -1 2.400 0l0.800 1.800c0.200 0.600 -0.800 1.200 -0.600 1.800c0.600 1.400 2 2.800 3.400 3.400c0.600 0.200 1.200 -0.800 1.800 -0.600l1.800 0.800c1 0.400 1.200 1.600 0 2.400c-4.400 2.800 -12.400 -5.200 -9.600 -9.600z" fill="#fff"/>
<circle cx="882" cy="1046" r="8" fill="#f20d0d"/>
<rect x="870.0" y="1072.3" width="6" height="2.6" rx="1.3" fill="#9b9b9b"/>
<circle cx="917" cy="1055.600" r="12" fill="url(#gEdge)"/><path d="M906.600 1049.600c3 -5 9.400 -7.400 15 -5c5 2.200 7.800 7 7.200 11.400c-0.400 2.600 -2.600 4.400 -5.400 4.400c-3 0 -4.200 -1.600 -3.600 -3.600c0.400 -1.600 -0.400 -3.800 -3 -4.800c-3.800 -1.400 -8 -0.600 -10.200 -2.400z" fill="url(#gEdge2)"/><path d="M915.400 1055.200c-2.800 2 -2.800 6.200 0.600 8.600c3 2 7.400 1.600 10 -0.600c-2.200 4 -7 5.600 -11.400 4.200c-6 -2 -7.600 -8.600 -4.600 -12.600c1.400 -1 3.600 -0.600 5.400 0.400z" fill="#0b4e96"/><path d="M917.600 1053.800c1.400 0.600 2.400 2 2.200 3.600c-0.200 1.200 0.400 2.400 2 2.800c-2.800 0.800 -5.800 -1 -6.200 -3.600c-0.200 -1.400 0.800 -2.600 2 -2.800z" fill="#1f1f1f"/>
<rect x="949.300" y="1046.200" width="22" height="18.400" fill="#000" stroke="#9a9a9a" stroke-width="1"/><rect x="949.800" y="1046.700" width="21" height="1.800" fill="#cfcfcf" opacity="0.500"/><path d="M963.600 1054.400h5.400" stroke="#e6e6e6" stroke-width="0.900"/>
<rect x="993.200" y="1044.600" width="23.800" height="23.200" rx="2.400" fill="url(#gXa)"/><path d="M998.400 1050.800c0 -2.600 4.200 -3.200 5.400 -0.800h2.600c1.200 -2.400 5.400 -1.800 5.400 0.800c0 1.600 -1 2.600 -2.200 3c1.200 0.400 2.200 1.400 2.200 3c0 2.600 -4.200 3.200 -5.400 0.800h-2.600c-1.200 2.400 -5.400 1.800 -5.400 -0.800c0 -1.600 1 -2.600 2.200 -3c-1.200 -0.400 -2.200 -1.400 -2.200 -3z" fill="none" stroke="#fff" stroke-width="2.400" stroke-linejoin="round" transform="translate(0 2.300)"/>
<circle cx="1049" cy="1056" r="11.400" fill="#f2c230"/><path d="M1049 1056L1039.130 1050.300A11.400 11.400 0 0 1 1058.870 1050.300Z" fill="#dc4437"/><path d="M1039.130 1050.300A11.400 11.400 0 0 1 1058.870 1050.300L1049 1050.300Z" fill="#dc4437"/><path d="M1039.130 1050.300A11.400 11.400 0 0 0 1049 1067.400L1054 1058.800L1049 1056Z" fill="#1e9b57"/><path d="M1039.130 1050.300L1044.200 1058.900L1049 1067.400A11.400 11.400 0 0 1 1039.130 1050.300Z" fill="#1e9b57"/><circle cx="1049" cy="1056" r="5.400" fill="#f4f4f4"/><circle cx="1049" cy="1056" r="4.200" fill="#4285f4"/>
<rect x="1046.0" y="1072.3" width="6" height="2.6" rx="1.3" fill="#9b9b9b"/>
<circle cx="1093" cy="1056" r="12" fill="url(#gAtom)"/><g fill="none" stroke="#f4fff8" stroke-width="0.900"><ellipse cx="1093" cy="1056" rx="3.400" ry="8.600"/><ellipse cx="1093" cy="1056" rx="3.400" ry="8.600" transform="rotate(60 1093 1056)"/><ellipse cx="1093" cy="1056" rx="3.400" ry="8.600" transform="rotate(-60 1093 1056)"/></g><circle cx="1093" cy="1056" r="1.200" fill="#f4fff8"/>
<path d="M1137 1044.400l10 5v12.800l-10 5.400l-10 -5.400v-12.800z" fill="#1c6fe0"/><path d="M1137 1044.400l10 5l-10 5l-10 -5z" fill="#3b8bf2"/><path d="M1137 1054.400l10 -5v12.800l-10 5.400z" fill="#4a95f5"/><path d="M1132 1051.800l5 -2.400l5 2.400v5.800l-5 2.600l-5 -2.600z" fill="#f59a3a"/><path d="M1132 1051.800l5 -2.400l5 2.400l-5 2.400z" fill="#fbb768"/><path d="M1137 1054.400v13.200M1127 1055.600l10 5.200l10 -5.200M1132 1046.900l10 5M1142 1046.900l-10 5M1132 1052v12.600M1142 1052v12.600" stroke="#0d3f8e" stroke-width="0.600" fill="none" opacity="0.700"/>
<circle cx="1181" cy="1056" r="11.200" fill="#f6f6f6"/>
<rect x="1178.6" y="1048.6" width="2.6" height="6.8" rx="1.300" fill="#36c5f0"/>
<rect x="1174" y="1052.8" width="6.8" height="2.6" rx="1.300" fill="#36c5f0"/>
<rect x="1182.8" y="1049.2" width="2.6" height="6.8" rx="1.300" fill="#2eb67d"/>
<rect x="1182.8" y="1052.8" width="6.4" height="2.6" rx="1.300" fill="#2eb67d"/>
<rect x="1180.8" y="1056.8" width="2.6" height="6.8" rx="1.300" fill="#ecb22e"/>
<rect x="1180.8" y="1056.8" width="6.8" height="2.6" rx="1.300" fill="#ecb22e"/>
<rect x="1176.6" y="1056.4" width="2.6" height="6.8" rx="1.300" fill="#e01e5a"/>
<rect x="1173.6" y="1056.8" width="6" height="2.6" rx="1.300" fill="#e01e5a"/>
<path d="M1225 1044.800l10.600 10.400c0.800 1 0.400 2 -0.800 2.200h-19.600c-1.200 -0.200 -1.600 -1.200 -0.800 -2.200z" fill="url(#gInk)"/><path d="M1219 1057.400c2 1.600 4 1 6 2.400c2 -1.400 5 -1.200 7 -2.200c-1 2.400 -4 2.600 -4.600 4.400c-0.400 1.400 1 2 0.400 3.400c-0.600 1.200 -2.600 1.600 -3.600 0.400c-0.800 -1 0.600 -2.200 -0.200 -3.200c-1 -1.200 -4.400 -2 -5 -5.200z" fill="#0a0a0a"/><path d="M1220.400 1048.200l4.600 -3.400l4.400 3.600l-2.600 1.400l-1.800 -1.400l-2 1.400z" fill="#fafafa"/><ellipse cx="1225.400" cy="1055" rx="2.600" ry="1.800" fill="#050505"/>
<rect x="1257" y="1044" width="24.200" height="24.200" fill="url(#gFus)"/><path d="M1264.800 1063.200v-15.400c0 -1 0.600 -1.600 1.600 -1.600h8.800v3.600h-5.800v3.200h5v3.400h-5v6.800c0 1.200 -1 1.800 -2.400 1.800c-1.400 0 -2.200 -0.600 -2.200 -1.800z" fill="url(#gF)"/><path d="M1264.800 1063.200v-15.400c0 -1 0.600 -1.600 1.600 -1.600h1.800v17c0 1.200 -0.800 1.800 -1.800 1.800c-1 0 -1.600 -0.600 -1.600 -1.800z" fill="#f9c064"/>
<rect x="1261.5" y="1072" width="15.6" height="3" rx="1.5" fill="#4cc2ff"/>
<path d="M1322.37 1053.91L1325.25 1054.06L1325.25 1057.94L1322.37 1058.09L1321.11 1061.14L1323.03 1063.29L1320.29 1066.03L1318.14 1064.11L1315.09 1065.37L1314.94 1068.25L1311.06 1068.25L1310.91 1065.37L1307.86 1064.11L1305.71 1066.03L1302.97 1063.29L1304.89 1061.14L1303.63 1058.09L1300.75 1057.94L1300.75 1054.06L1303.63 1053.91L1304.89 1050.86L1302.97 1048.71L1305.71 1045.97L1307.86 1047.89L1310.91 1046.63L1311.06 1043.75L1314.94 1043.75L1315.09 1046.63L1318.14 1047.89L1320.29 1045.97L1323.03 1048.71L1321.11 1050.86Z" fill="url(#gGear)"/><circle cx="1313" cy="1056" r="9.41" fill="url(#gGear)"/><circle cx="1313" cy="1056" r="5.60" fill="#f6f6f6"/>
<circle cx="1313" cy="1056" r="3.900" fill="#1668c8"/>
<rect x="1310.0" y="1072.3" width="6" height="2.6" rx="1.3" fill="#9b9b9b"/>
<path d="M1640.300 1059.400l5.700 -5.800l5.700 5.800" fill="none" stroke="#f4f4f4" stroke-width="1.300"/>
<path d="M1671 1055.600a6.800 6.800 0 0 1 12.600 -3.200M1684.400 1056.600a6.800 6.800 0 0 1 -12.600 3.200" fill="none" stroke="#f4f4f4" stroke-width="1.100"/><path d="M1684.200 1049.400v3.400h-3.400M1671.200 1062.800v-3.400h3.400" fill="none" stroke="#f4f4f4" stroke-width="1.100"/>
<circle cx="1682.200" cy="1060.400" r="4" fill="#ff9e0b"/>
<g fill="none" stroke="#f4f4f4" stroke-width="1.300" stroke-linecap="round"><path d="M1746.600 1053.800a10.600 10.600 0 0 1 15 0"/><path d="M1749 1056.400a7.200 7.200 0 0 1 10.200 0"/><path d="M1751.400 1058.800a3.800 3.800 0 0 1 5.400 0"/></g><circle cx="1754.100" cy="1060.800" r="1.200" fill="#f4f4f4"/>
<path d="M1770.300 1053.800h2.800l3.800 -3.400v11.400l-3.800 -3.400h-2.800z" fill="none" stroke="#f4f4f4" stroke-width="1.200" stroke-linejoin="round"/><g fill="none" stroke-linecap="round"><path d="M1779.200 1053.600a3.600 3.600 0 0 1 0 5" stroke="#f4f4f4" stroke-width="1.200"/><path d="M1781.400 1051.600a6.600 6.600 0 0 1 0 9" stroke="#f4f4f4" stroke-width="1.200"/><path d="M1783.600 1049.600a9.600 9.600 0 0 1 0 13" stroke="#8a8a8a" stroke-width="1.200"/></g>
<rect x="1797.800" y="1052" width="10.400" height="8.200" rx="1.600" fill="none" stroke="#f4f4f4" stroke-width="1.200"/><rect x="1799.400" y="1053.600" width="6" height="5" rx="0.600" fill="#f4f4f4"/><rect x="1808.800" y="1054.400" width="1.400" height="3.400" rx="0.600" fill="#f4f4f4"/><path d="M1794.600 1049.600v2.400M1797.200 1049.600v2.400" stroke="#f4f4f4" stroke-width="1.100"/><path d="M1793.800 1052h4.200v2.400c0 1.200 -0.800 2 -2.100 2c-1.300 0 -2.100 -0.800 -2.100 -2z" fill="#f4f4f4"/><path d="M1795.900 1056v4.600" stroke="#f4f4f4" stroke-width="1.100"/>
<circle cx="1891.800" cy="1056" r="8.200" fill="#4cc2ff"/>
</svg>
<span class="t" style="left:879.60px;top:4.77px;font-size:12.5px;line-height:19px;color:#fff;font-weight:bold;transform:scaleX(0.7481);">1</span>
<span class="t" style="left:951.40px;top:16.69px;font-size:5.5px;line-height:8px;color:#e8e8e8;font-weight:normal;transform:scaleX(1.4229);">C:\</span>
<span class="t" style="left:1272.40px;top:30.25px;font-size:3.6px;line-height:5px;color:#e56a0e;font-weight:bold;transform:scaleX(1.0989);">360</span>
<span class="t" style="left:1704.50px;top:9.16px;font-size:10.5px;line-height:16px;color:#fff;font-weight:normal;transform:scaleX(1.0152);">ENG</span>
<span class="t" style="left:1708.80px;top:25.36px;font-size:10.5px;line-height:16px;color:#fff;font-weight:normal;transform:scaleX(0.9872);">US</span>
<span class="t" style="left:1837.60px;top:8.43px;font-size:10.6px;line-height:16px;color:#fff;font-weight:normal;transform:scaleX(1.0055);">8:11 PM</span>
<span class="t" style="left:1825.50px;top:23.95px;font-size:11.4px;line-height:17px;color:#fff;font-weight:normal;transform:scaleX(1.0228);">2/11/2022</span>
<span class="t" style="left:1889.00px;top:16.33px;font-size:10.6px;line-height:16px;color:#111;font-weight:normal;transform:scaleX(0.9500);">7</span>
</div>
</body></html>
